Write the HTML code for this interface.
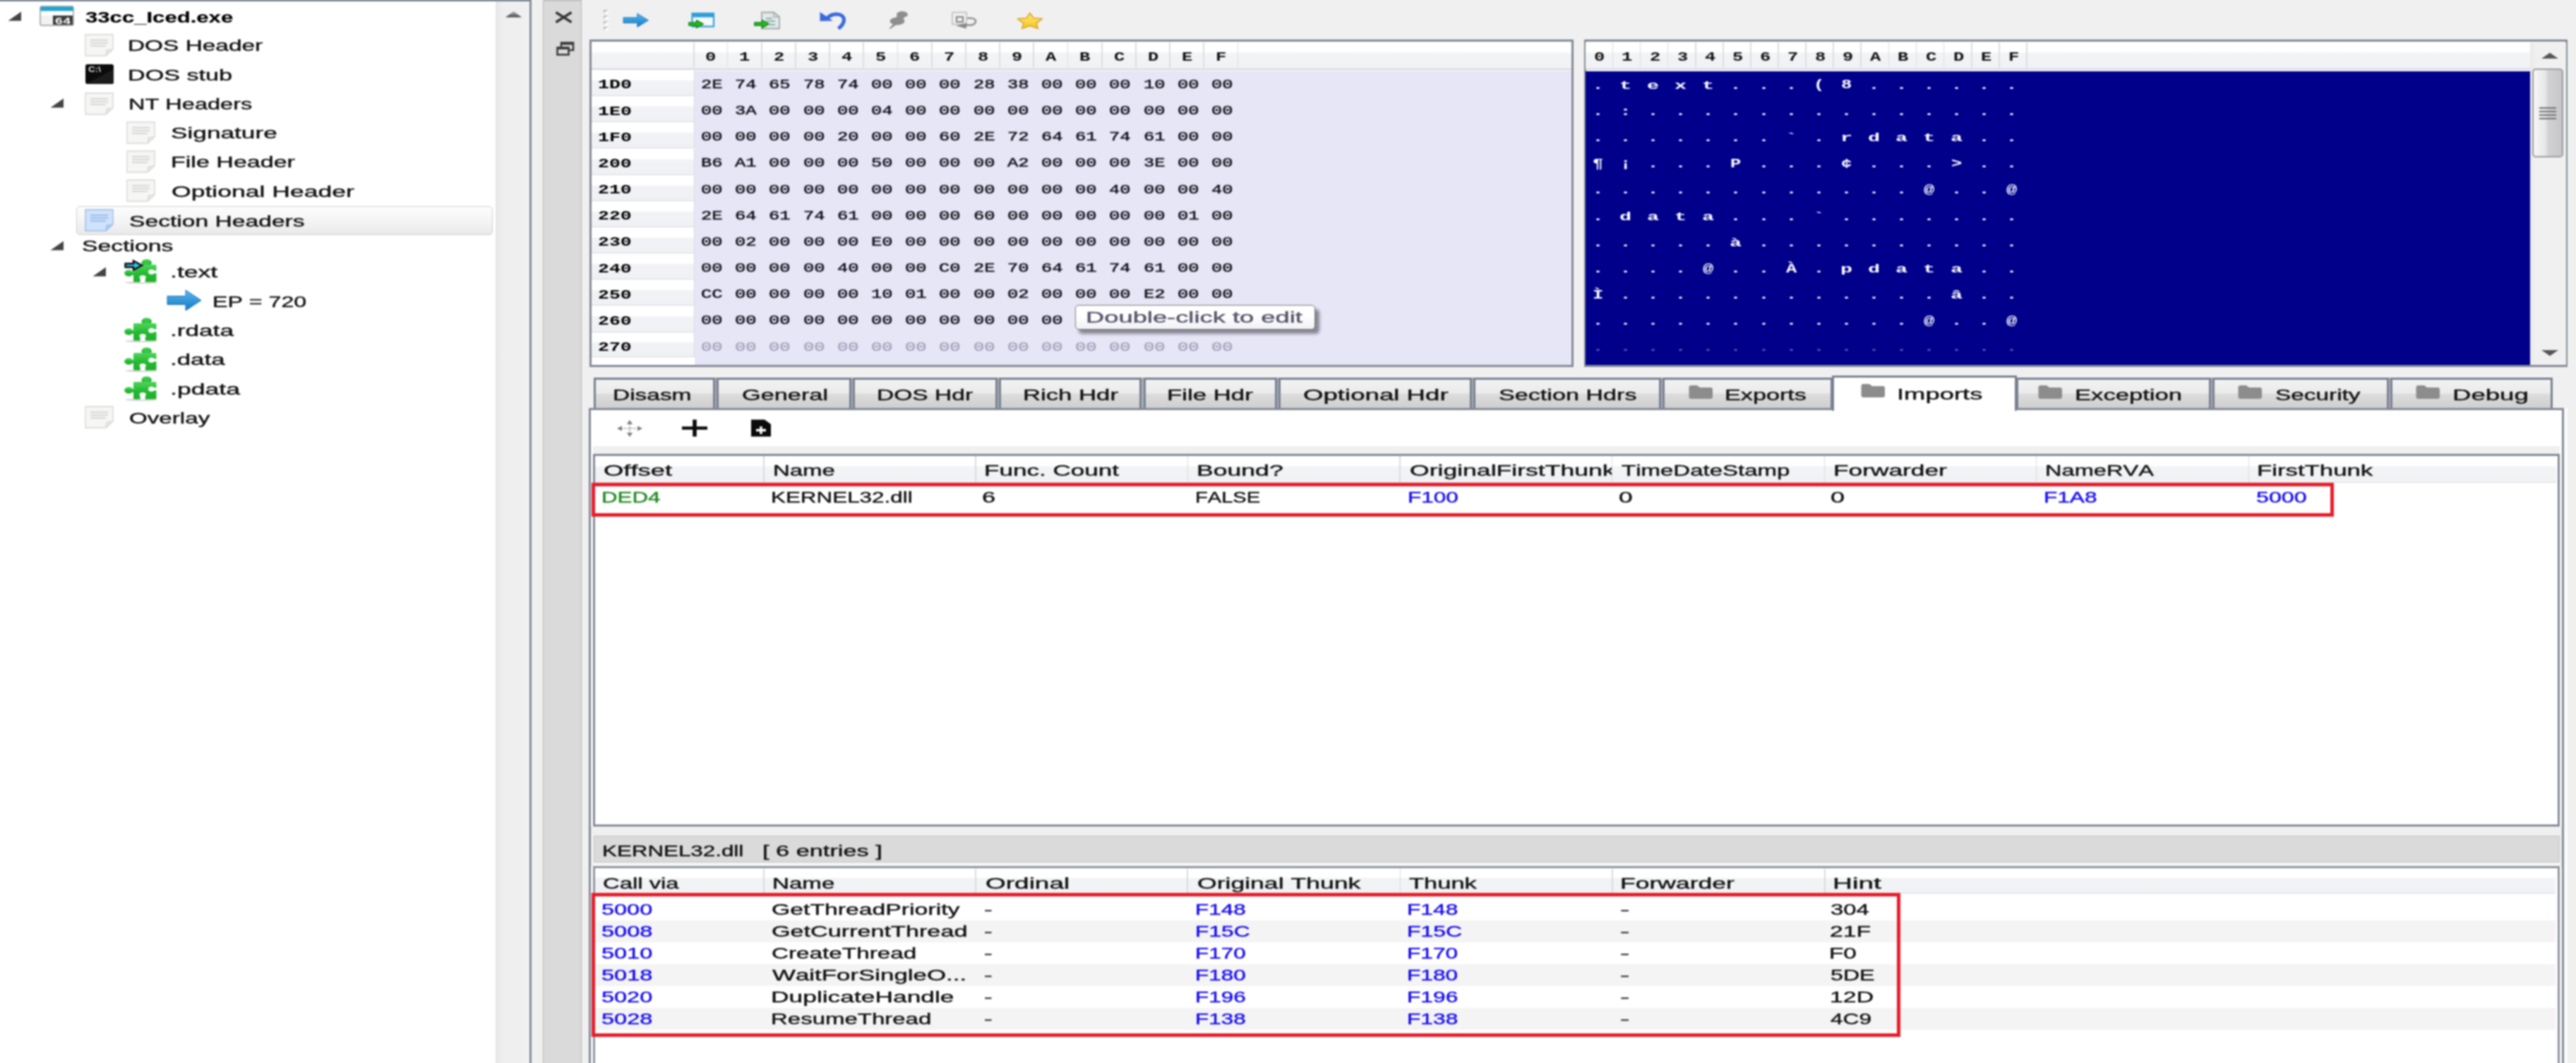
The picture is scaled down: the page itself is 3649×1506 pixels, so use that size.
<!DOCTYPE html>
<html><head><meta charset="utf-8"><title>PE-bear</title><style>
html,body{margin:0;padding:0}
html{width:3649px;height:1506px;overflow:hidden}
body{width:3649px;height:1506px;overflow:hidden;background:#f0f0f0;position:relative;font-family:"Liberation Sans",sans-serif;font-kerning:none}
div,span.t,svg{position:absolute;box-sizing:border-box}
#w{left:0;top:0;width:3649px;height:1506px;overflow:hidden;background:#f0f0f0}
#f{left:-16px;top:-16px;width:3681px;height:1538px;background:#f0f0f0;filter:blur(0.9px);overflow:hidden}
#c{left:16px;top:16px;width:3649px;height:1522px}
.t{white-space:pre;line-height:1;transform-origin:0 0;display:block}
.s{font-family:"Liberation Sans",sans-serif;-webkit-text-stroke:0.4px currentColor}
.m{font-family:"Liberation Mono",monospace}
.m.k{-webkit-text-stroke:0.55px currentColor}
.s.b{-webkit-text-stroke:0.2px currentColor}
.b{font-weight:bold}
</style></head><body>
<div id="w"><div id="f"><div id="c">
<div style="left:-16.0px;top:-16.0px;width:718.0px;height:1540.0px;background:#fff;"></div>
<div style="left:702.0px;top:-16.0px;width:48.5px;height:1540.0px;background:linear-gradient(90deg,#e6e6e6 0,#efefef 10px,#f0f0f0 100%);"></div>
<div style="left:-16.0px;top:-16.0px;width:769.0px;height:17.6px;background:#7d8694;"></div>
<div style="left:750.3px;top:-16.0px;width:3.0px;height:1540.0px;background:#868d9a;"></div>
<svg style="left:714px;top:14px" width="28" height="12" viewBox="0 0 28 12"><defs><linearGradient id="ga" x1="0" y1="0" x2="0" y2="1"><stop offset="0" stop-color="#bbb"/><stop offset="1" stop-color="#444"/></linearGradient></defs><path d="M2 10.5 L13.5 2 L25 10.5 Z" fill="url(#ga)"/></svg>
<div style="left:768.8px;top:-16.0px;width:55.5px;height:1540.0px;background:#dadada;border-left:1.5px solid #b6b6b6;border-right:1.5px solid #b6b6b6;"></div>
<div style="left:768.8px;top:-16.0px;width:55.5px;height:17.6px;background:#c4c4c4;"></div>
<svg style="left:784.5px;top:15px" width="27" height="19" viewBox="0 0 27 19"><path d="M2.5 2.5 L24.5 16.5 M24.5 2.5 L2.5 16.5" stroke="#363636" stroke-width="3.8" fill="none"/></svg>
<svg style="left:787px;top:58px" width="28" height="22" viewBox="0 0 28 22"><path d="M8 8 V2.5 H25 V13 H19" stroke="#3a3a3a" stroke-width="2.6" fill="none"/><rect x="8" y="2" width="17" height="3.5" fill="#3a3a3a"/><rect x="2.5" y="9.5" width="16" height="10" stroke="#3a3a3a" stroke-width="2.6" fill="none"/><rect x="2.5" y="8.5" width="16" height="3.5" fill="#3a3a3a"/></svg>
<div style="left:108.0px;top:292.0px;width:590.0px;height:40.5px;background:linear-gradient(180deg,#fdfdfd 0,#f4f4f4 55%,#e9e9e9 100%);border:1.5px solid #d0d0d0;border-radius:5px;"></div>
<svg style="left:10.5px;top:15.5px" width="20" height="14" viewBox="0 0 20 14"><path d="M0.5 13.5 L19 13.5 L19 0.5 Z" fill="#444"/></svg>
<svg style="left:56px;top:8px" width="49" height="29" viewBox="0 0 49 29"><rect x="1" y="1" width="47" height="27" rx="2.5" fill="#f2f2f2" stroke="#9a9a9a" stroke-width="1.5"/><path d="M1.5 3.5 Q1.5 1.5 3.5 1.5 H45.5 Q47.5 1.5 47.5 3.5 V7.5 H1.5 Z" fill="#1fa3cf"/><rect x="2" y="8" width="45" height="6" fill="#fff"/><rect x="19" y="14" width="28" height="13" fill="#3a3a3a"/><text x="21.5" y="25.5" font-family="Liberation Mono,monospace" font-weight="bold" font-size="13" textLength="23" lengthAdjust="spacingAndGlyphs" fill="#fff">64</text></svg>
<span class="t s b" style="left:121.4px;top:14.4px;font-size:22.5px;color:#000;transform:scaleX(1.382);">33cc_Iced.exe</span>
<svg style="left:120px;top:48px" width="42" height="32" viewBox="0 0 42 32"><path d="M1 1 H40 V22 L30 31 H1 Z" fill="#f6f6f5" stroke="#d6d6d3" stroke-width="1.4"/><path d="M40 22 L30 31 L31 23 Z" fill="#e6e6e4" stroke="#d6d6d3" stroke-width="1"/><path d="M8 9 H33 M8 13 H33 M8 17 H30" stroke="#d6d6d3" stroke-width="2.2"/><path d="M10 11 H30 M10 15 H28" stroke="#f6f6f5" stroke-width="1.5" stroke-dasharray="3 2"/></svg>
<span class="t s" style="left:181.3px;top:55.3px;font-size:21.5px;color:#111;transform:scaleX(1.553);">DOS Header</span>
<svg style="left:120px;top:90px" width="42" height="30" viewBox="0 0 42 30"><rect x="1" y="1" width="40" height="28" rx="3" fill="#0b0b0b"/><path d="M2 29 L41 8 V27 Q41 29 39 29 Z" fill="#1c1c1c"/><text x="5" y="12" font-family="Liberation Sans,sans-serif" font-weight="bold" font-size="10" textLength="18" lengthAdjust="spacingAndGlyphs" fill="#ddd">C:\</text></svg>
<span class="t s" style="left:181.3px;top:97.3px;font-size:21.5px;color:#111;transform:scaleX(1.589);">DOS stub</span>
<svg style="left:71px;top:139px" width="20" height="14" viewBox="0 0 20 14"><path d="M0.5 13.5 L19 13.5 L19 0.5 Z" fill="#444"/></svg>
<svg style="left:120px;top:131px" width="42" height="32" viewBox="0 0 42 32"><path d="M1 1 H40 V22 L30 31 H1 Z" fill="#f6f6f5" stroke="#d6d6d3" stroke-width="1.4"/><path d="M40 22 L30 31 L31 23 Z" fill="#e6e6e4" stroke="#d6d6d3" stroke-width="1"/><path d="M8 9 H33 M8 13 H33 M8 17 H30" stroke="#d6d6d3" stroke-width="2.2"/><path d="M10 11 H30 M10 15 H28" stroke="#f6f6f5" stroke-width="1.5" stroke-dasharray="3 2"/></svg>
<span class="t s" style="left:182.4px;top:137.6px;font-size:21.5px;color:#111;transform:scaleX(1.512);">NT Headers</span>
<svg style="left:179px;top:172px" width="42" height="32" viewBox="0 0 42 32"><path d="M1 1 H40 V22 L30 31 H1 Z" fill="#f6f6f5" stroke="#d6d6d3" stroke-width="1.4"/><path d="M40 22 L30 31 L31 23 Z" fill="#e6e6e4" stroke="#d6d6d3" stroke-width="1"/><path d="M8 9 H33 M8 13 H33 M8 17 H30" stroke="#d6d6d3" stroke-width="2.2"/><path d="M10 11 H30 M10 15 H28" stroke="#f6f6f5" stroke-width="1.5" stroke-dasharray="3 2"/></svg>
<span class="t s" style="left:242.0px;top:178.8px;font-size:21.5px;color:#111;transform:scaleX(1.638);">Signature</span>
<svg style="left:179px;top:213px" width="42" height="32" viewBox="0 0 42 32"><path d="M1 1 H40 V22 L30 31 H1 Z" fill="#f6f6f5" stroke="#d6d6d3" stroke-width="1.4"/><path d="M40 22 L30 31 L31 23 Z" fill="#e6e6e4" stroke="#d6d6d3" stroke-width="1"/><path d="M8 9 H33 M8 13 H33 M8 17 H30" stroke="#d6d6d3" stroke-width="2.2"/><path d="M10 11 H30 M10 15 H28" stroke="#f6f6f5" stroke-width="1.5" stroke-dasharray="3 2"/></svg>
<span class="t s" style="left:241.6px;top:220.3px;font-size:21.5px;color:#111;transform:scaleX(1.583);">File Header</span>
<svg style="left:179px;top:254px" width="42" height="32" viewBox="0 0 42 32"><path d="M1 1 H40 V22 L30 31 H1 Z" fill="#f6f6f5" stroke="#d6d6d3" stroke-width="1.4"/><path d="M40 22 L30 31 L31 23 Z" fill="#e6e6e4" stroke="#d6d6d3" stroke-width="1"/><path d="M8 9 H33 M8 13 H33 M8 17 H30" stroke="#d6d6d3" stroke-width="2.2"/><path d="M10 11 H30 M10 15 H28" stroke="#f6f6f5" stroke-width="1.5" stroke-dasharray="3 2"/></svg>
<span class="t s" style="left:242.7px;top:262.0px;font-size:21.5px;color:#111;transform:scaleX(1.653);">Optional Header</span>
<svg style="left:120px;top:296px" width="42" height="32" viewBox="0 0 42 32"><path d="M1 1 H40 V22 L30 31 H1 Z" fill="#cfe2fb" stroke="#9cbce6" stroke-width="1.4"/><path d="M40 22 L30 31 L31 23 Z" fill="#a9cbf3" stroke="#9cbce6" stroke-width="1"/><path d="M8 9 H33 M8 13 H33 M8 17 H30" stroke="#9cbce6" stroke-width="2.2"/><path d="M10 11 H30 M10 15 H28" stroke="#cfe2fb" stroke-width="1.5" stroke-dasharray="3 2"/></svg>
<span class="t s" style="left:182.5px;top:303.5px;font-size:21.5px;color:#111;transform:scaleX(1.564);">Section Headers</span>
<svg style="left:71px;top:341px" width="20" height="14" viewBox="0 0 20 14"><path d="M0.5 13.5 L19 13.5 L19 0.5 Z" fill="#444"/></svg>
<span class="t s" style="left:116.1px;top:338.8px;font-size:21.5px;color:#111;transform:scaleX(1.569);">Sections</span>
<svg style="left:131px;top:378px" width="20" height="14" viewBox="0 0 20 14"><path d="M0.5 13.5 L19 13.5 L19 0.5 Z" fill="#444"/></svg>
<svg style="left:176.0px;top:367px" width="48" height="36" viewBox="0 0 48 36"><defs><linearGradient id="gp" x1="0" y1="0" x2="0" y2="1"><stop offset="0" stop-color="#4fd65c"/><stop offset="0.5" stop-color="#27b934"/><stop offset="1" stop-color="#1cb026"/></linearGradient></defs><ellipse cx="24" cy="33.3" rx="23" ry="1.6" fill="#bdbdbd" opacity="0.7"/><g fill="url(#gp)"><ellipse cx="31.7" cy="5.2" rx="7.2" ry="5"/><rect x="28" y="5" width="7.4" height="6"/><rect x="13" y="8" width="32.5" height="24.6" rx="1.5"/><ellipse cx="6.4" cy="20" rx="6.2" ry="4.7"/><rect x="8" y="17.6" width="8" height="4.8"/></g><g fill="#fff"><ellipse cx="38.5" cy="18.3" rx="4.4" ry="3.5"/><rect x="40" y="16.4" width="6" height="3.8"/><rect x="22.6" y="26.2" width="7.2" height="7"/><ellipse cx="26.2" cy="26" rx="4.6" ry="3"/></g><path d="M1.5 6.5 H13 V2.5 L25 9 L13 15.5 V11.5 H1.5 Z" fill="#3db9ee" stroke="#0a0a0a" stroke-width="2.4" stroke-linejoin="miter"/></svg>
<span class="t s" style="left:241.1px;top:376.1px;font-size:21.5px;color:#111;transform:scaleX(1.655);">.text</span>
<svg style="left:236px;top:410px" width="50" height="31" viewBox="0 0 50 31"><defs><linearGradient id="gb" x1="0" y1="0" x2="0" y2="1"><stop offset="0" stop-color="#5ab8ee"/><stop offset="1" stop-color="#1279c4"/></linearGradient></defs><path d="M1 9.5 H27 V1 L49 15.5 L27 30 V21.5 H1 Z" fill="url(#gb)" stroke="#1a78bd" stroke-width="1"/></svg>
<span class="t s" style="left:301.2px;top:417.6px;font-size:21.5px;color:#111;transform:scaleX(1.495);">EP = 720</span>
<svg style="left:176.0px;top:450px" width="48" height="36" viewBox="0 0 48 36"><defs><linearGradient id="gp" x1="0" y1="0" x2="0" y2="1"><stop offset="0" stop-color="#4fd65c"/><stop offset="0.5" stop-color="#27b934"/><stop offset="1" stop-color="#1cb026"/></linearGradient></defs><ellipse cx="24" cy="33.3" rx="23" ry="1.6" fill="#bdbdbd" opacity="0.7"/><g fill="url(#gp)"><ellipse cx="31.7" cy="5.2" rx="7.2" ry="5"/><rect x="28" y="5" width="7.4" height="6"/><rect x="13" y="8" width="32.5" height="24.6" rx="1.5"/><ellipse cx="6.4" cy="20" rx="6.2" ry="4.7"/><rect x="8" y="17.6" width="8" height="4.8"/></g><g fill="#fff"><ellipse cx="38.5" cy="18.3" rx="4.4" ry="3.5"/><rect x="40" y="16.4" width="6" height="3.8"/><rect x="22.6" y="26.2" width="7.2" height="7"/><ellipse cx="26.2" cy="26" rx="4.6" ry="3"/></g></svg>
<span class="t s" style="left:241.1px;top:458.6px;font-size:21.5px;color:#111;transform:scaleX(1.636);">.rdata</span>
<svg style="left:176.0px;top:491.5px" width="48" height="36" viewBox="0 0 48 36"><defs><linearGradient id="gp" x1="0" y1="0" x2="0" y2="1"><stop offset="0" stop-color="#4fd65c"/><stop offset="0.5" stop-color="#27b934"/><stop offset="1" stop-color="#1cb026"/></linearGradient></defs><ellipse cx="24" cy="33.3" rx="23" ry="1.6" fill="#bdbdbd" opacity="0.7"/><g fill="url(#gp)"><ellipse cx="31.7" cy="5.2" rx="7.2" ry="5"/><rect x="28" y="5" width="7.4" height="6"/><rect x="13" y="8" width="32.5" height="24.6" rx="1.5"/><ellipse cx="6.4" cy="20" rx="6.2" ry="4.7"/><rect x="8" y="17.6" width="8" height="4.8"/></g><g fill="#fff"><ellipse cx="38.5" cy="18.3" rx="4.4" ry="3.5"/><rect x="40" y="16.4" width="6" height="3.8"/><rect x="22.6" y="26.2" width="7.2" height="7"/><ellipse cx="26.2" cy="26" rx="4.6" ry="3"/></g></svg>
<span class="t s" style="left:241.2px;top:500.1px;font-size:21.5px;color:#111;transform:scaleX(1.621);">.data</span>
<svg style="left:176.0px;top:533px" width="48" height="36" viewBox="0 0 48 36"><defs><linearGradient id="gp" x1="0" y1="0" x2="0" y2="1"><stop offset="0" stop-color="#4fd65c"/><stop offset="0.5" stop-color="#27b934"/><stop offset="1" stop-color="#1cb026"/></linearGradient></defs><ellipse cx="24" cy="33.3" rx="23" ry="1.6" fill="#bdbdbd" opacity="0.7"/><g fill="url(#gp)"><ellipse cx="31.7" cy="5.2" rx="7.2" ry="5"/><rect x="28" y="5" width="7.4" height="6"/><rect x="13" y="8" width="32.5" height="24.6" rx="1.5"/><ellipse cx="6.4" cy="20" rx="6.2" ry="4.7"/><rect x="8" y="17.6" width="8" height="4.8"/></g><g fill="#fff"><ellipse cx="38.5" cy="18.3" rx="4.4" ry="3.5"/><rect x="40" y="16.4" width="6" height="3.8"/><rect x="22.6" y="26.2" width="7.2" height="7"/><ellipse cx="26.2" cy="26" rx="4.6" ry="3"/></g></svg>
<span class="t s" style="left:241.1px;top:541.5px;font-size:21.5px;color:#111;transform:scaleX(1.655);">.pdata</span>
<svg style="left:120px;top:575px" width="42" height="32" viewBox="0 0 42 32"><path d="M1 1 H40 V22 L30 31 H1 Z" fill="#f6f6f5" stroke="#d6d6d3" stroke-width="1.4"/><path d="M40 22 L30 31 L31 23 Z" fill="#e6e6e4" stroke="#d6d6d3" stroke-width="1"/><path d="M8 9 H33 M8 13 H33 M8 17 H30" stroke="#d6d6d3" stroke-width="2.2"/><path d="M10 11 H30 M10 15 H28" stroke="#f6f6f5" stroke-width="1.5" stroke-dasharray="3 2"/></svg>
<span class="t s" style="left:182.5px;top:583.3px;font-size:21.5px;color:#111;transform:scaleX(1.542);">Overlay</span>
<svg style="left:853px;top:13px" width="10" height="31" viewBox="0 0 10 31"><rect x="2" y="1" width="5" height="4" fill="#bdbdbd"/><rect x="4" y="3" width="5" height="3" fill="#fff"/><rect x="2" y="9" width="5" height="4" fill="#bdbdbd"/><rect x="4" y="11" width="5" height="3" fill="#fff"/><rect x="2" y="17" width="5" height="4" fill="#bdbdbd"/><rect x="4" y="19" width="5" height="3" fill="#fff"/><rect x="2" y="25" width="5" height="4" fill="#bdbdbd"/><rect x="4" y="27" width="5" height="3" fill="#fff"/></svg>
<svg style="left:881.5px;top:18px" width="37.5" height="21.5" viewBox="0 0 38 22" preserveAspectRatio="none"><defs><linearGradient id="gc" x1="0" y1="0" x2="0" y2="1"><stop offset="0" stop-color="#5ab8ee"/><stop offset="1" stop-color="#1279c4"/></linearGradient></defs><path d="M1 7 H21 V1 L37 11 L21 21 V15 H1 Z" fill="url(#gc)" stroke="#1a78bd" stroke-width="0.8"/></svg>
<svg style="left:975px;top:17px" width="38" height="24" viewBox="0 0 38 24"><rect x="5.5" y="2" width="30.5" height="18.5" fill="#f8f8f8" stroke="#2f9fd8" stroke-width="2.2"/><rect x="5.5" y="2" width="30.5" height="5.5" fill="#2f9fd8"/><path d="M0.8 14.8 H11.5 V11.6 L21.5 17 L11.5 22.4 V19.2 H0.8 Z" fill="#1fc01f" stroke="#0f7a12" stroke-width="1.2"/></svg>
<svg style="left:1068px;top:15.5px" width="38" height="26" viewBox="0 0 38 26"><path d="M11 1.5 H28 L36 8 V24.5 H11 Z" fill="#dcecea" stroke="#a6a6a6" stroke-width="1.8"/><path d="M28 1.5 V8 H36" fill="none" stroke="#a6a6a6" stroke-width="1.4"/><path d="M17 10 H26 M17 14 H30 M22 19 H30" stroke="#9fa8a8" stroke-width="1.8"/><path d="M0.8 15.8 H11.5 V12.6 L21.5 18 L11.5 23.4 V20.2 H0.8 Z" fill="#1fc01f" stroke="#0f7a12" stroke-width="1.2"/></svg>
<svg style="left:1160px;top:15px" width="40" height="27" viewBox="0 0 40 27"><path d="M12 10.5 C20 2 36 4 35.5 13.5 C35 19 31 23 27.5 25.5" stroke="#3a6bdc" stroke-width="5.2" fill="none" stroke-linecap="butt"/><path d="M1.5 2 L1.5 15 L20 14.5 Z" fill="#3a6bdc"/></svg>
<svg style="left:1258px;top:15px" width="31" height="27" viewBox="0 0 31 27"><g fill="#8e8e8e"><ellipse cx="20" cy="5.5" rx="8" ry="4.4"/><ellipse cx="13" cy="15" rx="10.5" ry="5.4"/><path d="M14 6 L24 8 L19 16 L9 13 Z"/><path d="M9 17 L1.5 25.5 L3 26 L13 19 Z"/></g></svg>
<svg style="left:1347px;top:15.5px" width="39" height="26" viewBox="0 0 39 26"><rect x="2" y="1.5" width="20" height="17" fill="#efefef" stroke="#c2c2c2" stroke-width="1.8"/><rect x="8" y="8" width="9" height="7" fill="none" stroke="#8a8a8a" stroke-width="2.2"/><path d="M23 10 C36 8 39 16 30 19.5 H22" stroke="#8f8f8f" stroke-width="2.4" fill="none"/><path d="M7 20.5 L22 16.5 V24.5 Z" fill="#8a8a8a"/></svg>
<svg style="left:1440px;top:17px" width="38" height="25" viewBox="0 0 38 25"><defs><linearGradient id="gs" x1="0" y1="0" x2="0" y2="1"><stop offset="0" stop-color="#f9e27a"/><stop offset="0.55" stop-color="#f8d84a"/><stop offset="1" stop-color="#f2c40a"/></linearGradient></defs><path d="M19 1.5 L24 8.5 L36.5 9.5 L28 16 L30.5 23.5 L19 19.5 L7.5 23.5 L10 16 L1.5 9.5 L14 8.5 Z" fill="url(#gs)" stroke="#e2a428" stroke-width="1.6" stroke-linejoin="round"/></svg>
<div style="left:834.6px;top:56.0px;width:1394.0px;height:464.0px;background:#fff;border:3px solid #828a96;"></div>
<div style="left:837.6px;top:59.6px;width:1388.0px;height:39.4px;background:linear-gradient(180deg,#fff 0,#fff 38%,#f3f4f6 40%,#f1f2f5 100%);border-bottom:2.2px solid #d6d7da;"></div>
<div style="left:984.2px;top:100.0px;width:1241.4px;height:417.0px;background:#e7e6f6;"></div>
<div style="left:837.6px;top:99.0px;width:146.0px;height:37.2px;background:linear-gradient(180deg,#fff 0,#fff 40%,#f2f3f6 42%,#f0f1f4 100%);border-bottom:1.6px solid #d8d9dd;border-right:1.6px solid #d8d9dd;"></div>
<span class="t m b" style="left:847.3px;top:111.4px;font-size:19px;color:#000;transform:scaleX(1.400);">1D0</span>
<div style="left:837.6px;top:136.2px;width:146.0px;height:37.2px;background:linear-gradient(180deg,#fff 0,#fff 40%,#f2f3f6 42%,#f0f1f4 100%);border-bottom:1.6px solid #d8d9dd;border-right:1.6px solid #d8d9dd;"></div>
<span class="t m b" style="left:847.3px;top:148.6px;font-size:19px;color:#000;transform:scaleX(1.400);">1E0</span>
<div style="left:837.6px;top:173.3px;width:146.0px;height:37.2px;background:linear-gradient(180deg,#fff 0,#fff 40%,#f2f3f6 42%,#f0f1f4 100%);border-bottom:1.6px solid #d8d9dd;border-right:1.6px solid #d8d9dd;"></div>
<span class="t m b" style="left:847.3px;top:185.8px;font-size:19px;color:#000;transform:scaleX(1.400);">1F0</span>
<div style="left:837.6px;top:210.5px;width:146.0px;height:37.2px;background:linear-gradient(180deg,#fff 0,#fff 40%,#f2f3f6 42%,#f0f1f4 100%);border-bottom:1.6px solid #d8d9dd;border-right:1.6px solid #d8d9dd;"></div>
<span class="t m b" style="left:847.4px;top:222.9px;font-size:19px;color:#000;transform:scaleX(1.396);">200</span>
<div style="left:837.6px;top:247.6px;width:146.0px;height:37.2px;background:linear-gradient(180deg,#fff 0,#fff 40%,#f2f3f6 42%,#f0f1f4 100%);border-bottom:1.6px solid #d8d9dd;border-right:1.6px solid #d8d9dd;"></div>
<span class="t m b" style="left:847.4px;top:260.1px;font-size:19px;color:#000;transform:scaleX(1.396);">210</span>
<div style="left:837.6px;top:284.8px;width:146.0px;height:37.2px;background:linear-gradient(180deg,#fff 0,#fff 40%,#f2f3f6 42%,#f0f1f4 100%);border-bottom:1.6px solid #d8d9dd;border-right:1.6px solid #d8d9dd;"></div>
<span class="t m b" style="left:847.4px;top:297.2px;font-size:19px;color:#000;transform:scaleX(1.396);">220</span>
<div style="left:837.6px;top:322.0px;width:146.0px;height:37.2px;background:linear-gradient(180deg,#fff 0,#fff 40%,#f2f3f6 42%,#f0f1f4 100%);border-bottom:1.6px solid #d8d9dd;border-right:1.6px solid #d8d9dd;"></div>
<span class="t m b" style="left:847.4px;top:334.4px;font-size:19px;color:#000;transform:scaleX(1.396);">230</span>
<div style="left:837.6px;top:359.1px;width:146.0px;height:37.2px;background:linear-gradient(180deg,#fff 0,#fff 40%,#f2f3f6 42%,#f0f1f4 100%);border-bottom:1.6px solid #d8d9dd;border-right:1.6px solid #d8d9dd;"></div>
<span class="t m b" style="left:847.4px;top:371.6px;font-size:19px;color:#000;transform:scaleX(1.396);">240</span>
<div style="left:837.6px;top:396.3px;width:146.0px;height:37.2px;background:linear-gradient(180deg,#fff 0,#fff 40%,#f2f3f6 42%,#f0f1f4 100%);border-bottom:1.6px solid #d8d9dd;border-right:1.6px solid #d8d9dd;"></div>
<span class="t m b" style="left:847.4px;top:408.7px;font-size:19px;color:#000;transform:scaleX(1.396);">250</span>
<div style="left:837.6px;top:433.4px;width:146.0px;height:37.2px;background:linear-gradient(180deg,#fff 0,#fff 40%,#f2f3f6 42%,#f0f1f4 100%);border-bottom:1.6px solid #d8d9dd;border-right:1.6px solid #d8d9dd;"></div>
<span class="t m b" style="left:847.4px;top:445.9px;font-size:19px;color:#000;transform:scaleX(1.396);">260</span>
<div style="left:837.6px;top:470.6px;width:146.0px;height:35.4px;background:linear-gradient(180deg,#fff 0,#fff 40%,#f2f3f6 42%,#f0f1f4 100%);border-bottom:1.6px solid #d8d9dd;border-right:1.6px solid #d8d9dd;"></div>
<span class="t m b" style="left:847.4px;top:483.0px;font-size:19px;color:#000;transform:scaleX(1.396);">270</span>
<span class="t m b" style="left:999.2px;top:72.4px;font-size:19px;color:#111;transform:scaleX(1.342);">0</span>
<div style="left:1029.6px;top:60.4px;width:1.8px;height:36.0px;background:#dcdde1;"></div>
<span class="t m k" style="left:992.9px;top:110.9px;font-size:19px;color:#14141f;transform:scaleX(1.342);">2E</span>
<span class="t m k" style="left:992.9px;top:148.1px;font-size:19px;color:#14141f;transform:scaleX(1.342);">00</span>
<span class="t m k" style="left:992.9px;top:185.3px;font-size:19px;color:#14141f;transform:scaleX(1.342);">00</span>
<span class="t m k" style="left:992.9px;top:222.4px;font-size:19px;color:#14141f;transform:scaleX(1.342);">B6</span>
<span class="t m k" style="left:992.9px;top:259.6px;font-size:19px;color:#14141f;transform:scaleX(1.342);">00</span>
<span class="t m k" style="left:992.9px;top:296.7px;font-size:19px;color:#14141f;transform:scaleX(1.342);">2E</span>
<span class="t m k" style="left:992.9px;top:333.9px;font-size:19px;color:#14141f;transform:scaleX(1.342);">00</span>
<span class="t m k" style="left:992.9px;top:371.1px;font-size:19px;color:#14141f;transform:scaleX(1.342);">00</span>
<span class="t m k" style="left:992.9px;top:408.2px;font-size:19px;color:#14141f;transform:scaleX(1.342);">CC</span>
<span class="t m k" style="left:992.9px;top:445.4px;font-size:19px;color:#14141f;transform:scaleX(1.342);">00</span>
<span class="t m k" style="left:992.9px;top:482.5px;font-size:19px;color:#a6a6be;transform:scaleX(1.342);">00</span>
<span class="t m b" style="left:1047.4px;top:72.4px;font-size:19px;color:#111;transform:scaleX(1.342);">1</span>
<div style="left:1077.8px;top:60.4px;width:1.8px;height:36.0px;background:#dcdde1;"></div>
<span class="t m k" style="left:1041.1px;top:110.9px;font-size:19px;color:#14141f;transform:scaleX(1.342);">74</span>
<span class="t m k" style="left:1041.1px;top:148.1px;font-size:19px;color:#14141f;transform:scaleX(1.342);">3A</span>
<span class="t m k" style="left:1041.1px;top:185.3px;font-size:19px;color:#14141f;transform:scaleX(1.342);">00</span>
<span class="t m k" style="left:1041.1px;top:222.4px;font-size:19px;color:#14141f;transform:scaleX(1.342);">A1</span>
<span class="t m k" style="left:1041.1px;top:259.6px;font-size:19px;color:#14141f;transform:scaleX(1.342);">00</span>
<span class="t m k" style="left:1041.1px;top:296.7px;font-size:19px;color:#14141f;transform:scaleX(1.342);">64</span>
<span class="t m k" style="left:1041.1px;top:333.9px;font-size:19px;color:#14141f;transform:scaleX(1.342);">02</span>
<span class="t m k" style="left:1041.1px;top:371.1px;font-size:19px;color:#14141f;transform:scaleX(1.342);">00</span>
<span class="t m k" style="left:1041.1px;top:408.2px;font-size:19px;color:#14141f;transform:scaleX(1.342);">00</span>
<span class="t m k" style="left:1041.1px;top:445.4px;font-size:19px;color:#14141f;transform:scaleX(1.342);">00</span>
<span class="t m k" style="left:1041.1px;top:482.5px;font-size:19px;color:#a6a6be;transform:scaleX(1.342);">00</span>
<span class="t m b" style="left:1095.6px;top:72.4px;font-size:19px;color:#111;transform:scaleX(1.342);">2</span>
<div style="left:1126.0px;top:60.4px;width:1.8px;height:36.0px;background:#dcdde1;"></div>
<span class="t m k" style="left:1089.3px;top:110.9px;font-size:19px;color:#14141f;transform:scaleX(1.342);">65</span>
<span class="t m k" style="left:1089.3px;top:148.1px;font-size:19px;color:#14141f;transform:scaleX(1.342);">00</span>
<span class="t m k" style="left:1089.3px;top:185.3px;font-size:19px;color:#14141f;transform:scaleX(1.342);">00</span>
<span class="t m k" style="left:1089.3px;top:222.4px;font-size:19px;color:#14141f;transform:scaleX(1.342);">00</span>
<span class="t m k" style="left:1089.3px;top:259.6px;font-size:19px;color:#14141f;transform:scaleX(1.342);">00</span>
<span class="t m k" style="left:1089.3px;top:296.7px;font-size:19px;color:#14141f;transform:scaleX(1.342);">61</span>
<span class="t m k" style="left:1089.3px;top:333.9px;font-size:19px;color:#14141f;transform:scaleX(1.342);">00</span>
<span class="t m k" style="left:1089.3px;top:371.1px;font-size:19px;color:#14141f;transform:scaleX(1.342);">00</span>
<span class="t m k" style="left:1089.3px;top:408.2px;font-size:19px;color:#14141f;transform:scaleX(1.342);">00</span>
<span class="t m k" style="left:1089.3px;top:445.4px;font-size:19px;color:#14141f;transform:scaleX(1.342);">00</span>
<span class="t m k" style="left:1089.3px;top:482.5px;font-size:19px;color:#a6a6be;transform:scaleX(1.342);">00</span>
<span class="t m b" style="left:1143.8px;top:72.4px;font-size:19px;color:#111;transform:scaleX(1.342);">3</span>
<div style="left:1174.2px;top:60.4px;width:1.8px;height:36.0px;background:#dcdde1;"></div>
<span class="t m k" style="left:1137.5px;top:110.9px;font-size:19px;color:#14141f;transform:scaleX(1.342);">78</span>
<span class="t m k" style="left:1137.5px;top:148.1px;font-size:19px;color:#14141f;transform:scaleX(1.342);">00</span>
<span class="t m k" style="left:1137.5px;top:185.3px;font-size:19px;color:#14141f;transform:scaleX(1.342);">00</span>
<span class="t m k" style="left:1137.5px;top:222.4px;font-size:19px;color:#14141f;transform:scaleX(1.342);">00</span>
<span class="t m k" style="left:1137.5px;top:259.6px;font-size:19px;color:#14141f;transform:scaleX(1.342);">00</span>
<span class="t m k" style="left:1137.5px;top:296.7px;font-size:19px;color:#14141f;transform:scaleX(1.342);">74</span>
<span class="t m k" style="left:1137.5px;top:333.9px;font-size:19px;color:#14141f;transform:scaleX(1.342);">00</span>
<span class="t m k" style="left:1137.5px;top:371.1px;font-size:19px;color:#14141f;transform:scaleX(1.342);">00</span>
<span class="t m k" style="left:1137.5px;top:408.2px;font-size:19px;color:#14141f;transform:scaleX(1.342);">00</span>
<span class="t m k" style="left:1137.5px;top:445.4px;font-size:19px;color:#14141f;transform:scaleX(1.342);">00</span>
<span class="t m k" style="left:1137.5px;top:482.5px;font-size:19px;color:#a6a6be;transform:scaleX(1.342);">00</span>
<span class="t m b" style="left:1192.0px;top:72.4px;font-size:19px;color:#111;transform:scaleX(1.342);">4</span>
<div style="left:1222.4px;top:60.4px;width:1.8px;height:36.0px;background:#dcdde1;"></div>
<span class="t m k" style="left:1185.7px;top:110.9px;font-size:19px;color:#14141f;transform:scaleX(1.342);">74</span>
<span class="t m k" style="left:1185.7px;top:148.1px;font-size:19px;color:#14141f;transform:scaleX(1.342);">00</span>
<span class="t m k" style="left:1185.7px;top:185.3px;font-size:19px;color:#14141f;transform:scaleX(1.342);">20</span>
<span class="t m k" style="left:1185.7px;top:222.4px;font-size:19px;color:#14141f;transform:scaleX(1.342);">00</span>
<span class="t m k" style="left:1185.7px;top:259.6px;font-size:19px;color:#14141f;transform:scaleX(1.342);">00</span>
<span class="t m k" style="left:1185.7px;top:296.7px;font-size:19px;color:#14141f;transform:scaleX(1.342);">61</span>
<span class="t m k" style="left:1185.7px;top:333.9px;font-size:19px;color:#14141f;transform:scaleX(1.342);">00</span>
<span class="t m k" style="left:1185.7px;top:371.1px;font-size:19px;color:#14141f;transform:scaleX(1.342);">40</span>
<span class="t m k" style="left:1185.7px;top:408.2px;font-size:19px;color:#14141f;transform:scaleX(1.342);">00</span>
<span class="t m k" style="left:1185.7px;top:445.4px;font-size:19px;color:#14141f;transform:scaleX(1.342);">00</span>
<span class="t m k" style="left:1185.7px;top:482.5px;font-size:19px;color:#a6a6be;transform:scaleX(1.342);">00</span>
<span class="t m b" style="left:1240.2px;top:72.4px;font-size:19px;color:#111;transform:scaleX(1.342);">5</span>
<div style="left:1270.6px;top:60.4px;width:1.8px;height:36.0px;background:#dcdde1;"></div>
<span class="t m k" style="left:1233.9px;top:110.9px;font-size:19px;color:#14141f;transform:scaleX(1.342);">00</span>
<span class="t m k" style="left:1233.9px;top:148.1px;font-size:19px;color:#14141f;transform:scaleX(1.342);">04</span>
<span class="t m k" style="left:1233.9px;top:185.3px;font-size:19px;color:#14141f;transform:scaleX(1.342);">00</span>
<span class="t m k" style="left:1233.9px;top:222.4px;font-size:19px;color:#14141f;transform:scaleX(1.342);">50</span>
<span class="t m k" style="left:1233.9px;top:259.6px;font-size:19px;color:#14141f;transform:scaleX(1.342);">00</span>
<span class="t m k" style="left:1233.9px;top:296.7px;font-size:19px;color:#14141f;transform:scaleX(1.342);">00</span>
<span class="t m k" style="left:1233.9px;top:333.9px;font-size:19px;color:#14141f;transform:scaleX(1.342);">E0</span>
<span class="t m k" style="left:1233.9px;top:371.1px;font-size:19px;color:#14141f;transform:scaleX(1.342);">00</span>
<span class="t m k" style="left:1233.9px;top:408.2px;font-size:19px;color:#14141f;transform:scaleX(1.342);">10</span>
<span class="t m k" style="left:1233.9px;top:445.4px;font-size:19px;color:#14141f;transform:scaleX(1.342);">00</span>
<span class="t m k" style="left:1233.9px;top:482.5px;font-size:19px;color:#a6a6be;transform:scaleX(1.342);">00</span>
<span class="t m b" style="left:1288.4px;top:72.4px;font-size:19px;color:#111;transform:scaleX(1.342);">6</span>
<div style="left:1318.8px;top:60.4px;width:1.8px;height:36.0px;background:#dcdde1;"></div>
<span class="t m k" style="left:1282.1px;top:110.9px;font-size:19px;color:#14141f;transform:scaleX(1.342);">00</span>
<span class="t m k" style="left:1282.1px;top:148.1px;font-size:19px;color:#14141f;transform:scaleX(1.342);">00</span>
<span class="t m k" style="left:1282.1px;top:185.3px;font-size:19px;color:#14141f;transform:scaleX(1.342);">00</span>
<span class="t m k" style="left:1282.1px;top:222.4px;font-size:19px;color:#14141f;transform:scaleX(1.342);">00</span>
<span class="t m k" style="left:1282.1px;top:259.6px;font-size:19px;color:#14141f;transform:scaleX(1.342);">00</span>
<span class="t m k" style="left:1282.1px;top:296.7px;font-size:19px;color:#14141f;transform:scaleX(1.342);">00</span>
<span class="t m k" style="left:1282.1px;top:333.9px;font-size:19px;color:#14141f;transform:scaleX(1.342);">00</span>
<span class="t m k" style="left:1282.1px;top:371.1px;font-size:19px;color:#14141f;transform:scaleX(1.342);">00</span>
<span class="t m k" style="left:1282.1px;top:408.2px;font-size:19px;color:#14141f;transform:scaleX(1.342);">01</span>
<span class="t m k" style="left:1282.1px;top:445.4px;font-size:19px;color:#14141f;transform:scaleX(1.342);">00</span>
<span class="t m k" style="left:1282.1px;top:482.5px;font-size:19px;color:#a6a6be;transform:scaleX(1.342);">00</span>
<span class="t m b" style="left:1336.6px;top:72.4px;font-size:19px;color:#111;transform:scaleX(1.342);">7</span>
<div style="left:1367.0px;top:60.4px;width:1.8px;height:36.0px;background:#dcdde1;"></div>
<span class="t m k" style="left:1330.3px;top:110.9px;font-size:19px;color:#14141f;transform:scaleX(1.342);">00</span>
<span class="t m k" style="left:1330.3px;top:148.1px;font-size:19px;color:#14141f;transform:scaleX(1.342);">00</span>
<span class="t m k" style="left:1330.3px;top:185.3px;font-size:19px;color:#14141f;transform:scaleX(1.342);">60</span>
<span class="t m k" style="left:1330.3px;top:222.4px;font-size:19px;color:#14141f;transform:scaleX(1.342);">00</span>
<span class="t m k" style="left:1330.3px;top:259.6px;font-size:19px;color:#14141f;transform:scaleX(1.342);">00</span>
<span class="t m k" style="left:1330.3px;top:296.7px;font-size:19px;color:#14141f;transform:scaleX(1.342);">00</span>
<span class="t m k" style="left:1330.3px;top:333.9px;font-size:19px;color:#14141f;transform:scaleX(1.342);">00</span>
<span class="t m k" style="left:1330.3px;top:371.1px;font-size:19px;color:#14141f;transform:scaleX(1.342);">C0</span>
<span class="t m k" style="left:1330.3px;top:408.2px;font-size:19px;color:#14141f;transform:scaleX(1.342);">00</span>
<span class="t m k" style="left:1330.3px;top:445.4px;font-size:19px;color:#14141f;transform:scaleX(1.342);">00</span>
<span class="t m k" style="left:1330.3px;top:482.5px;font-size:19px;color:#a6a6be;transform:scaleX(1.342);">00</span>
<span class="t m b" style="left:1384.8px;top:72.4px;font-size:19px;color:#111;transform:scaleX(1.342);">8</span>
<div style="left:1415.2px;top:60.4px;width:1.8px;height:36.0px;background:#dcdde1;"></div>
<span class="t m k" style="left:1378.5px;top:110.9px;font-size:19px;color:#14141f;transform:scaleX(1.342);">28</span>
<span class="t m k" style="left:1378.5px;top:148.1px;font-size:19px;color:#14141f;transform:scaleX(1.342);">00</span>
<span class="t m k" style="left:1378.5px;top:185.3px;font-size:19px;color:#14141f;transform:scaleX(1.342);">2E</span>
<span class="t m k" style="left:1378.5px;top:222.4px;font-size:19px;color:#14141f;transform:scaleX(1.342);">00</span>
<span class="t m k" style="left:1378.5px;top:259.6px;font-size:19px;color:#14141f;transform:scaleX(1.342);">00</span>
<span class="t m k" style="left:1378.5px;top:296.7px;font-size:19px;color:#14141f;transform:scaleX(1.342);">60</span>
<span class="t m k" style="left:1378.5px;top:333.9px;font-size:19px;color:#14141f;transform:scaleX(1.342);">00</span>
<span class="t m k" style="left:1378.5px;top:371.1px;font-size:19px;color:#14141f;transform:scaleX(1.342);">2E</span>
<span class="t m k" style="left:1378.5px;top:408.2px;font-size:19px;color:#14141f;transform:scaleX(1.342);">00</span>
<span class="t m k" style="left:1378.5px;top:445.4px;font-size:19px;color:#14141f;transform:scaleX(1.342);">00</span>
<span class="t m k" style="left:1378.5px;top:482.5px;font-size:19px;color:#a6a6be;transform:scaleX(1.342);">00</span>
<span class="t m b" style="left:1433.0px;top:72.4px;font-size:19px;color:#111;transform:scaleX(1.342);">9</span>
<div style="left:1463.4px;top:60.4px;width:1.8px;height:36.0px;background:#dcdde1;"></div>
<span class="t m k" style="left:1426.7px;top:110.9px;font-size:19px;color:#14141f;transform:scaleX(1.342);">38</span>
<span class="t m k" style="left:1426.7px;top:148.1px;font-size:19px;color:#14141f;transform:scaleX(1.342);">00</span>
<span class="t m k" style="left:1426.7px;top:185.3px;font-size:19px;color:#14141f;transform:scaleX(1.342);">72</span>
<span class="t m k" style="left:1426.7px;top:222.4px;font-size:19px;color:#14141f;transform:scaleX(1.342);">A2</span>
<span class="t m k" style="left:1426.7px;top:259.6px;font-size:19px;color:#14141f;transform:scaleX(1.342);">00</span>
<span class="t m k" style="left:1426.7px;top:296.7px;font-size:19px;color:#14141f;transform:scaleX(1.342);">00</span>
<span class="t m k" style="left:1426.7px;top:333.9px;font-size:19px;color:#14141f;transform:scaleX(1.342);">00</span>
<span class="t m k" style="left:1426.7px;top:371.1px;font-size:19px;color:#14141f;transform:scaleX(1.342);">70</span>
<span class="t m k" style="left:1426.7px;top:408.2px;font-size:19px;color:#14141f;transform:scaleX(1.342);">02</span>
<span class="t m k" style="left:1426.7px;top:445.4px;font-size:19px;color:#14141f;transform:scaleX(1.342);">00</span>
<span class="t m k" style="left:1426.7px;top:482.5px;font-size:19px;color:#a6a6be;transform:scaleX(1.342);">00</span>
<span class="t m b" style="left:1481.2px;top:72.4px;font-size:19px;color:#111;transform:scaleX(1.342);">A</span>
<div style="left:1511.6px;top:60.4px;width:1.8px;height:36.0px;background:#dcdde1;"></div>
<span class="t m k" style="left:1474.9px;top:110.9px;font-size:19px;color:#14141f;transform:scaleX(1.342);">00</span>
<span class="t m k" style="left:1474.9px;top:148.1px;font-size:19px;color:#14141f;transform:scaleX(1.342);">00</span>
<span class="t m k" style="left:1474.9px;top:185.3px;font-size:19px;color:#14141f;transform:scaleX(1.342);">64</span>
<span class="t m k" style="left:1474.9px;top:222.4px;font-size:19px;color:#14141f;transform:scaleX(1.342);">00</span>
<span class="t m k" style="left:1474.9px;top:259.6px;font-size:19px;color:#14141f;transform:scaleX(1.342);">00</span>
<span class="t m k" style="left:1474.9px;top:296.7px;font-size:19px;color:#14141f;transform:scaleX(1.342);">00</span>
<span class="t m k" style="left:1474.9px;top:333.9px;font-size:19px;color:#14141f;transform:scaleX(1.342);">00</span>
<span class="t m k" style="left:1474.9px;top:371.1px;font-size:19px;color:#14141f;transform:scaleX(1.342);">64</span>
<span class="t m k" style="left:1474.9px;top:408.2px;font-size:19px;color:#14141f;transform:scaleX(1.342);">00</span>
<span class="t m k" style="left:1474.9px;top:445.4px;font-size:19px;color:#14141f;transform:scaleX(1.342);">00</span>
<span class="t m k" style="left:1474.9px;top:482.5px;font-size:19px;color:#a6a6be;transform:scaleX(1.342);">00</span>
<span class="t m b" style="left:1529.4px;top:72.4px;font-size:19px;color:#111;transform:scaleX(1.342);">B</span>
<div style="left:1559.8px;top:60.4px;width:1.8px;height:36.0px;background:#dcdde1;"></div>
<span class="t m k" style="left:1523.1px;top:110.9px;font-size:19px;color:#14141f;transform:scaleX(1.342);">00</span>
<span class="t m k" style="left:1523.1px;top:148.1px;font-size:19px;color:#14141f;transform:scaleX(1.342);">00</span>
<span class="t m k" style="left:1523.1px;top:185.3px;font-size:19px;color:#14141f;transform:scaleX(1.342);">61</span>
<span class="t m k" style="left:1523.1px;top:222.4px;font-size:19px;color:#14141f;transform:scaleX(1.342);">00</span>
<span class="t m k" style="left:1523.1px;top:259.6px;font-size:19px;color:#14141f;transform:scaleX(1.342);">00</span>
<span class="t m k" style="left:1523.1px;top:296.7px;font-size:19px;color:#14141f;transform:scaleX(1.342);">00</span>
<span class="t m k" style="left:1523.1px;top:333.9px;font-size:19px;color:#14141f;transform:scaleX(1.342);">00</span>
<span class="t m k" style="left:1523.1px;top:371.1px;font-size:19px;color:#14141f;transform:scaleX(1.342);">61</span>
<span class="t m k" style="left:1523.1px;top:408.2px;font-size:19px;color:#14141f;transform:scaleX(1.342);">00</span>
<span class="t m k" style="left:1523.1px;top:445.4px;font-size:19px;color:#14141f;transform:scaleX(1.342);">00</span>
<span class="t m k" style="left:1523.1px;top:482.5px;font-size:19px;color:#a6a6be;transform:scaleX(1.342);">00</span>
<span class="t m b" style="left:1577.6px;top:72.4px;font-size:19px;color:#111;transform:scaleX(1.342);">C</span>
<div style="left:1608.0px;top:60.4px;width:1.8px;height:36.0px;background:#dcdde1;"></div>
<span class="t m k" style="left:1571.3px;top:110.9px;font-size:19px;color:#14141f;transform:scaleX(1.342);">00</span>
<span class="t m k" style="left:1571.3px;top:148.1px;font-size:19px;color:#14141f;transform:scaleX(1.342);">00</span>
<span class="t m k" style="left:1571.3px;top:185.3px;font-size:19px;color:#14141f;transform:scaleX(1.342);">74</span>
<span class="t m k" style="left:1571.3px;top:222.4px;font-size:19px;color:#14141f;transform:scaleX(1.342);">00</span>
<span class="t m k" style="left:1571.3px;top:259.6px;font-size:19px;color:#14141f;transform:scaleX(1.342);">40</span>
<span class="t m k" style="left:1571.3px;top:296.7px;font-size:19px;color:#14141f;transform:scaleX(1.342);">00</span>
<span class="t m k" style="left:1571.3px;top:333.9px;font-size:19px;color:#14141f;transform:scaleX(1.342);">00</span>
<span class="t m k" style="left:1571.3px;top:371.1px;font-size:19px;color:#14141f;transform:scaleX(1.342);">74</span>
<span class="t m k" style="left:1571.3px;top:408.2px;font-size:19px;color:#14141f;transform:scaleX(1.342);">00</span>
<span class="t m k" style="left:1571.3px;top:445.4px;font-size:19px;color:#14141f;transform:scaleX(1.342);">40</span>
<span class="t m k" style="left:1571.3px;top:482.5px;font-size:19px;color:#a6a6be;transform:scaleX(1.342);">00</span>
<span class="t m b" style="left:1625.8px;top:72.4px;font-size:19px;color:#111;transform:scaleX(1.342);">D</span>
<div style="left:1656.2px;top:60.4px;width:1.8px;height:36.0px;background:#dcdde1;"></div>
<span class="t m k" style="left:1619.5px;top:110.9px;font-size:19px;color:#14141f;transform:scaleX(1.342);">10</span>
<span class="t m k" style="left:1619.5px;top:148.1px;font-size:19px;color:#14141f;transform:scaleX(1.342);">00</span>
<span class="t m k" style="left:1619.5px;top:185.3px;font-size:19px;color:#14141f;transform:scaleX(1.342);">61</span>
<span class="t m k" style="left:1619.5px;top:222.4px;font-size:19px;color:#14141f;transform:scaleX(1.342);">3E</span>
<span class="t m k" style="left:1619.5px;top:259.6px;font-size:19px;color:#14141f;transform:scaleX(1.342);">00</span>
<span class="t m k" style="left:1619.5px;top:296.7px;font-size:19px;color:#14141f;transform:scaleX(1.342);">00</span>
<span class="t m k" style="left:1619.5px;top:333.9px;font-size:19px;color:#14141f;transform:scaleX(1.342);">00</span>
<span class="t m k" style="left:1619.5px;top:371.1px;font-size:19px;color:#14141f;transform:scaleX(1.342);">61</span>
<span class="t m k" style="left:1619.5px;top:408.2px;font-size:19px;color:#14141f;transform:scaleX(1.342);">E2</span>
<span class="t m k" style="left:1619.5px;top:445.4px;font-size:19px;color:#14141f;transform:scaleX(1.342);">00</span>
<span class="t m k" style="left:1619.5px;top:482.5px;font-size:19px;color:#a6a6be;transform:scaleX(1.342);">00</span>
<span class="t m b" style="left:1674.0px;top:72.4px;font-size:19px;color:#111;transform:scaleX(1.342);">E</span>
<div style="left:1704.4px;top:60.4px;width:1.8px;height:36.0px;background:#dcdde1;"></div>
<span class="t m k" style="left:1667.7px;top:110.9px;font-size:19px;color:#14141f;transform:scaleX(1.342);">00</span>
<span class="t m k" style="left:1667.7px;top:148.1px;font-size:19px;color:#14141f;transform:scaleX(1.342);">00</span>
<span class="t m k" style="left:1667.7px;top:185.3px;font-size:19px;color:#14141f;transform:scaleX(1.342);">00</span>
<span class="t m k" style="left:1667.7px;top:222.4px;font-size:19px;color:#14141f;transform:scaleX(1.342);">00</span>
<span class="t m k" style="left:1667.7px;top:259.6px;font-size:19px;color:#14141f;transform:scaleX(1.342);">00</span>
<span class="t m k" style="left:1667.7px;top:296.7px;font-size:19px;color:#14141f;transform:scaleX(1.342);">01</span>
<span class="t m k" style="left:1667.7px;top:333.9px;font-size:19px;color:#14141f;transform:scaleX(1.342);">00</span>
<span class="t m k" style="left:1667.7px;top:371.1px;font-size:19px;color:#14141f;transform:scaleX(1.342);">00</span>
<span class="t m k" style="left:1667.7px;top:408.2px;font-size:19px;color:#14141f;transform:scaleX(1.342);">00</span>
<span class="t m k" style="left:1667.7px;top:445.4px;font-size:19px;color:#14141f;transform:scaleX(1.342);">00</span>
<span class="t m k" style="left:1667.7px;top:482.5px;font-size:19px;color:#a6a6be;transform:scaleX(1.342);">00</span>
<span class="t m b" style="left:1722.2px;top:72.4px;font-size:19px;color:#111;transform:scaleX(1.342);">F</span>
<div style="left:1752.6px;top:60.4px;width:1.8px;height:36.0px;background:#dcdde1;"></div>
<span class="t m k" style="left:1715.9px;top:110.9px;font-size:19px;color:#14141f;transform:scaleX(1.342);">00</span>
<span class="t m k" style="left:1715.9px;top:148.1px;font-size:19px;color:#14141f;transform:scaleX(1.342);">00</span>
<span class="t m k" style="left:1715.9px;top:185.3px;font-size:19px;color:#14141f;transform:scaleX(1.342);">00</span>
<span class="t m k" style="left:1715.9px;top:222.4px;font-size:19px;color:#14141f;transform:scaleX(1.342);">00</span>
<span class="t m k" style="left:1715.9px;top:259.6px;font-size:19px;color:#14141f;transform:scaleX(1.342);">40</span>
<span class="t m k" style="left:1715.9px;top:296.7px;font-size:19px;color:#14141f;transform:scaleX(1.342);">00</span>
<span class="t m k" style="left:1715.9px;top:333.9px;font-size:19px;color:#14141f;transform:scaleX(1.342);">00</span>
<span class="t m k" style="left:1715.9px;top:371.1px;font-size:19px;color:#14141f;transform:scaleX(1.342);">00</span>
<span class="t m k" style="left:1715.9px;top:408.2px;font-size:19px;color:#14141f;transform:scaleX(1.342);">00</span>
<span class="t m k" style="left:1715.9px;top:445.4px;font-size:19px;color:#14141f;transform:scaleX(1.342);">40</span>
<span class="t m k" style="left:1715.9px;top:482.5px;font-size:19px;color:#a6a6be;transform:scaleX(1.342);">00</span>
<div style="left:982.0px;top:60.4px;width:1.8px;height:36.0px;background:#dcdde1;"></div>
<div style="left:2243.8px;top:56.0px;width:1393.6px;height:464.0px;background:#fff;border:3px solid #828a96;"></div>
<div style="left:2246.4px;top:59.6px;width:1337.2px;height:39.0px;background:linear-gradient(180deg,#fff 0,#fff 38%,#f3f4f6 40%,#f1f2f5 100%);border-bottom:2.2px solid #d6d7da;"></div>
<div style="left:2246.4px;top:100.5px;width:1337.2px;height:416.9px;background:#00008b;"></div>
<span class="t m b" style="left:2258.3px;top:72.4px;font-size:19px;color:#111;transform:scaleX(1.342);">0</span>
<div style="left:2283.5px;top:60.4px;width:1.8px;height:36.0px;background:#dcdde1;"></div>
<span class="t m b" style="left:2254.9px;top:113.7px;font-size:16px;color:#fff;transform:scaleX(1.780);">.</span>
<span class="t m b" style="left:2254.9px;top:150.9px;font-size:16px;color:#fff;transform:scaleX(1.780);">.</span>
<span class="t m b" style="left:2254.9px;top:188.1px;font-size:16px;color:#fff;transform:scaleX(1.780);">.</span>
<span class="t m b" style="left:2255.8px;top:222.9px;font-size:19px;color:#fff;transform:scaleX(1.342);">¶</span>
<span class="t m b" style="left:2254.9px;top:262.4px;font-size:16px;color:#fff;transform:scaleX(1.780);">.</span>
<span class="t m b" style="left:2254.9px;top:299.5px;font-size:16px;color:#fff;transform:scaleX(1.780);">.</span>
<span class="t m b" style="left:2254.9px;top:336.7px;font-size:16px;color:#fff;transform:scaleX(1.780);">.</span>
<span class="t m b" style="left:2254.9px;top:373.9px;font-size:16px;color:#fff;transform:scaleX(1.780);">.</span>
<span class="t m b" style="left:2255.8px;top:408.7px;font-size:19px;color:#fff;transform:scaleX(1.342);">Ì</span>
<span class="t m b" style="left:2254.9px;top:448.2px;font-size:16px;color:#fff;transform:scaleX(1.780);">.</span>
<span class="t m b" style="left:2254.9px;top:485.3px;font-size:16px;color:#5d5db0;transform:scaleX(1.780);">.</span>
<span class="t m b" style="left:2297.4px;top:72.4px;font-size:19px;color:#111;transform:scaleX(1.342);">1</span>
<div style="left:2322.6px;top:60.4px;width:1.8px;height:36.0px;background:#dcdde1;"></div>
<span class="t m b" style="left:2294.0px;top:113.7px;font-size:16px;color:#fff;transform:scaleX(1.780);">t</span>
<span class="t m b" style="left:2294.0px;top:150.9px;font-size:16px;color:#fff;transform:scaleX(1.780);">:</span>
<span class="t m b" style="left:2294.0px;top:188.1px;font-size:16px;color:#fff;transform:scaleX(1.780);">.</span>
<span class="t m b" style="left:2294.9px;top:222.9px;font-size:19px;color:#fff;transform:scaleX(1.342);">¡</span>
<span class="t m b" style="left:2294.0px;top:262.4px;font-size:16px;color:#fff;transform:scaleX(1.780);">.</span>
<span class="t m b" style="left:2294.0px;top:299.5px;font-size:16px;color:#fff;transform:scaleX(1.780);">d</span>
<span class="t m b" style="left:2294.0px;top:336.7px;font-size:16px;color:#fff;transform:scaleX(1.780);">.</span>
<span class="t m b" style="left:2294.0px;top:373.9px;font-size:16px;color:#fff;transform:scaleX(1.780);">.</span>
<span class="t m b" style="left:2294.0px;top:411.0px;font-size:16px;color:#fff;transform:scaleX(1.780);">.</span>
<span class="t m b" style="left:2294.0px;top:448.2px;font-size:16px;color:#fff;transform:scaleX(1.780);">.</span>
<span class="t m b" style="left:2294.0px;top:485.3px;font-size:16px;color:#5d5db0;transform:scaleX(1.780);">.</span>
<span class="t m b" style="left:2336.5px;top:72.4px;font-size:19px;color:#111;transform:scaleX(1.342);">2</span>
<div style="left:2361.7px;top:60.4px;width:1.8px;height:36.0px;background:#dcdde1;"></div>
<span class="t m b" style="left:2333.1px;top:113.7px;font-size:16px;color:#fff;transform:scaleX(1.780);">e</span>
<span class="t m b" style="left:2333.1px;top:150.9px;font-size:16px;color:#fff;transform:scaleX(1.780);">.</span>
<span class="t m b" style="left:2333.1px;top:188.1px;font-size:16px;color:#fff;transform:scaleX(1.780);">.</span>
<span class="t m b" style="left:2333.1px;top:225.2px;font-size:16px;color:#fff;transform:scaleX(1.780);">.</span>
<span class="t m b" style="left:2333.1px;top:262.4px;font-size:16px;color:#fff;transform:scaleX(1.780);">.</span>
<span class="t m b" style="left:2333.1px;top:299.5px;font-size:16px;color:#fff;transform:scaleX(1.780);">a</span>
<span class="t m b" style="left:2333.1px;top:336.7px;font-size:16px;color:#fff;transform:scaleX(1.780);">.</span>
<span class="t m b" style="left:2333.1px;top:373.9px;font-size:16px;color:#fff;transform:scaleX(1.780);">.</span>
<span class="t m b" style="left:2333.1px;top:411.0px;font-size:16px;color:#fff;transform:scaleX(1.780);">.</span>
<span class="t m b" style="left:2333.1px;top:448.2px;font-size:16px;color:#fff;transform:scaleX(1.780);">.</span>
<span class="t m b" style="left:2333.1px;top:485.3px;font-size:16px;color:#5d5db0;transform:scaleX(1.780);">.</span>
<span class="t m b" style="left:2375.6px;top:72.4px;font-size:19px;color:#111;transform:scaleX(1.342);">3</span>
<div style="left:2400.8px;top:60.4px;width:1.8px;height:36.0px;background:#dcdde1;"></div>
<span class="t m b" style="left:2372.2px;top:113.7px;font-size:16px;color:#fff;transform:scaleX(1.780);">x</span>
<span class="t m b" style="left:2372.2px;top:150.9px;font-size:16px;color:#fff;transform:scaleX(1.780);">.</span>
<span class="t m b" style="left:2372.2px;top:188.1px;font-size:16px;color:#fff;transform:scaleX(1.780);">.</span>
<span class="t m b" style="left:2372.2px;top:225.2px;font-size:16px;color:#fff;transform:scaleX(1.780);">.</span>
<span class="t m b" style="left:2372.2px;top:262.4px;font-size:16px;color:#fff;transform:scaleX(1.780);">.</span>
<span class="t m b" style="left:2372.2px;top:299.5px;font-size:16px;color:#fff;transform:scaleX(1.780);">t</span>
<span class="t m b" style="left:2372.2px;top:336.7px;font-size:16px;color:#fff;transform:scaleX(1.780);">.</span>
<span class="t m b" style="left:2372.2px;top:373.9px;font-size:16px;color:#fff;transform:scaleX(1.780);">.</span>
<span class="t m b" style="left:2372.2px;top:411.0px;font-size:16px;color:#fff;transform:scaleX(1.780);">.</span>
<span class="t m b" style="left:2372.2px;top:448.2px;font-size:16px;color:#fff;transform:scaleX(1.780);">.</span>
<span class="t m b" style="left:2372.2px;top:485.3px;font-size:16px;color:#5d5db0;transform:scaleX(1.780);">.</span>
<span class="t m b" style="left:2414.7px;top:72.4px;font-size:19px;color:#111;transform:scaleX(1.342);">4</span>
<div style="left:2439.9px;top:60.4px;width:1.8px;height:36.0px;background:#dcdde1;"></div>
<span class="t m b" style="left:2411.3px;top:113.7px;font-size:16px;color:#fff;transform:scaleX(1.780);">t</span>
<span class="t m b" style="left:2411.3px;top:150.9px;font-size:16px;color:#fff;transform:scaleX(1.780);">.</span>
<span class="t m b" style="left:2411.3px;top:188.1px;font-size:16px;color:#fff;transform:scaleX(1.780);">.</span>
<span class="t m b" style="left:2411.3px;top:225.2px;font-size:16px;color:#fff;transform:scaleX(1.780);">.</span>
<span class="t m b" style="left:2411.3px;top:262.4px;font-size:16px;color:#fff;transform:scaleX(1.780);">.</span>
<span class="t m b" style="left:2411.3px;top:299.5px;font-size:16px;color:#fff;transform:scaleX(1.780);">a</span>
<span class="t m b" style="left:2411.3px;top:336.7px;font-size:16px;color:#fff;transform:scaleX(1.780);">.</span>
<span class="t m b" style="left:2412.2px;top:371.6px;font-size:19px;color:#fff;transform:scaleX(1.342);">@</span>
<span class="t m b" style="left:2411.3px;top:411.0px;font-size:16px;color:#fff;transform:scaleX(1.780);">.</span>
<span class="t m b" style="left:2411.3px;top:448.2px;font-size:16px;color:#fff;transform:scaleX(1.780);">.</span>
<span class="t m b" style="left:2411.3px;top:485.3px;font-size:16px;color:#5d5db0;transform:scaleX(1.780);">.</span>
<span class="t m b" style="left:2453.8px;top:72.4px;font-size:19px;color:#111;transform:scaleX(1.342);">5</span>
<div style="left:2479.0px;top:60.4px;width:1.8px;height:36.0px;background:#dcdde1;"></div>
<span class="t m b" style="left:2450.4px;top:113.7px;font-size:16px;color:#fff;transform:scaleX(1.780);">.</span>
<span class="t m b" style="left:2450.4px;top:150.9px;font-size:16px;color:#fff;transform:scaleX(1.780);">.</span>
<span class="t m b" style="left:2450.4px;top:188.1px;font-size:16px;color:#fff;transform:scaleX(1.780);">.</span>
<span class="t m b" style="left:2451.3px;top:222.9px;font-size:19px;color:#fff;transform:scaleX(1.342);">P</span>
<span class="t m b" style="left:2450.4px;top:262.4px;font-size:16px;color:#fff;transform:scaleX(1.780);">.</span>
<span class="t m b" style="left:2450.4px;top:299.5px;font-size:16px;color:#fff;transform:scaleX(1.780);">.</span>
<span class="t m b" style="left:2450.4px;top:336.7px;font-size:16px;color:#fff;transform:scaleX(1.780);">à</span>
<span class="t m b" style="left:2450.4px;top:373.9px;font-size:16px;color:#fff;transform:scaleX(1.780);">.</span>
<span class="t m b" style="left:2450.4px;top:411.0px;font-size:16px;color:#fff;transform:scaleX(1.780);">.</span>
<span class="t m b" style="left:2450.4px;top:448.2px;font-size:16px;color:#fff;transform:scaleX(1.780);">.</span>
<span class="t m b" style="left:2450.4px;top:485.3px;font-size:16px;color:#5d5db0;transform:scaleX(1.780);">.</span>
<span class="t m b" style="left:2492.9px;top:72.4px;font-size:19px;color:#111;transform:scaleX(1.342);">6</span>
<div style="left:2518.1px;top:60.4px;width:1.8px;height:36.0px;background:#dcdde1;"></div>
<span class="t m b" style="left:2489.5px;top:113.7px;font-size:16px;color:#fff;transform:scaleX(1.780);">.</span>
<span class="t m b" style="left:2489.5px;top:150.9px;font-size:16px;color:#fff;transform:scaleX(1.780);">.</span>
<span class="t m b" style="left:2489.5px;top:188.1px;font-size:16px;color:#fff;transform:scaleX(1.780);">.</span>
<span class="t m b" style="left:2489.5px;top:225.2px;font-size:16px;color:#fff;transform:scaleX(1.780);">.</span>
<span class="t m b" style="left:2489.5px;top:262.4px;font-size:16px;color:#fff;transform:scaleX(1.780);">.</span>
<span class="t m b" style="left:2489.5px;top:299.5px;font-size:16px;color:#fff;transform:scaleX(1.780);">.</span>
<span class="t m b" style="left:2489.5px;top:336.7px;font-size:16px;color:#fff;transform:scaleX(1.780);">.</span>
<span class="t m b" style="left:2489.5px;top:373.9px;font-size:16px;color:#fff;transform:scaleX(1.780);">.</span>
<span class="t m b" style="left:2489.5px;top:411.0px;font-size:16px;color:#fff;transform:scaleX(1.780);">.</span>
<span class="t m b" style="left:2489.5px;top:448.2px;font-size:16px;color:#fff;transform:scaleX(1.780);">.</span>
<span class="t m b" style="left:2489.5px;top:485.3px;font-size:16px;color:#5d5db0;transform:scaleX(1.780);">.</span>
<span class="t m b" style="left:2532.0px;top:72.4px;font-size:19px;color:#111;transform:scaleX(1.342);">7</span>
<div style="left:2557.2px;top:60.4px;width:1.8px;height:36.0px;background:#dcdde1;"></div>
<span class="t m b" style="left:2528.6px;top:113.7px;font-size:16px;color:#fff;transform:scaleX(1.780);">.</span>
<span class="t m b" style="left:2528.6px;top:150.9px;font-size:16px;color:#fff;transform:scaleX(1.780);">.</span>
<span class="t m b" style="left:2528.6px;top:188.1px;font-size:16px;color:#fff;transform:scaleX(1.780);">`</span>
<span class="t m b" style="left:2528.6px;top:225.2px;font-size:16px;color:#fff;transform:scaleX(1.780);">.</span>
<span class="t m b" style="left:2528.6px;top:262.4px;font-size:16px;color:#fff;transform:scaleX(1.780);">.</span>
<span class="t m b" style="left:2528.6px;top:299.5px;font-size:16px;color:#fff;transform:scaleX(1.780);">.</span>
<span class="t m b" style="left:2528.6px;top:336.7px;font-size:16px;color:#fff;transform:scaleX(1.780);">.</span>
<span class="t m b" style="left:2529.5px;top:371.6px;font-size:19px;color:#fff;transform:scaleX(1.342);">À</span>
<span class="t m b" style="left:2528.6px;top:411.0px;font-size:16px;color:#fff;transform:scaleX(1.780);">.</span>
<span class="t m b" style="left:2528.6px;top:448.2px;font-size:16px;color:#fff;transform:scaleX(1.780);">.</span>
<span class="t m b" style="left:2528.6px;top:485.3px;font-size:16px;color:#5d5db0;transform:scaleX(1.780);">.</span>
<span class="t m b" style="left:2571.1px;top:72.4px;font-size:19px;color:#111;transform:scaleX(1.342);">8</span>
<div style="left:2596.3px;top:60.4px;width:1.8px;height:36.0px;background:#dcdde1;"></div>
<span class="t m b" style="left:2568.6px;top:111.4px;font-size:19px;color:#fff;transform:scaleX(1.342);">(</span>
<span class="t m b" style="left:2567.7px;top:150.9px;font-size:16px;color:#fff;transform:scaleX(1.780);">.</span>
<span class="t m b" style="left:2567.7px;top:188.1px;font-size:16px;color:#fff;transform:scaleX(1.780);">.</span>
<span class="t m b" style="left:2567.7px;top:225.2px;font-size:16px;color:#fff;transform:scaleX(1.780);">.</span>
<span class="t m b" style="left:2567.7px;top:262.4px;font-size:16px;color:#fff;transform:scaleX(1.780);">.</span>
<span class="t m b" style="left:2567.7px;top:299.5px;font-size:16px;color:#fff;transform:scaleX(1.780);">`</span>
<span class="t m b" style="left:2567.7px;top:336.7px;font-size:16px;color:#fff;transform:scaleX(1.780);">.</span>
<span class="t m b" style="left:2567.7px;top:373.9px;font-size:16px;color:#fff;transform:scaleX(1.780);">.</span>
<span class="t m b" style="left:2567.7px;top:411.0px;font-size:16px;color:#fff;transform:scaleX(1.780);">.</span>
<span class="t m b" style="left:2567.7px;top:448.2px;font-size:16px;color:#fff;transform:scaleX(1.780);">.</span>
<span class="t m b" style="left:2567.7px;top:485.3px;font-size:16px;color:#5d5db0;transform:scaleX(1.780);">.</span>
<span class="t m b" style="left:2610.2px;top:72.4px;font-size:19px;color:#111;transform:scaleX(1.342);">9</span>
<div style="left:2635.4px;top:60.4px;width:1.8px;height:36.0px;background:#dcdde1;"></div>
<span class="t m b" style="left:2607.7px;top:111.4px;font-size:19px;color:#fff;transform:scaleX(1.342);">8</span>
<span class="t m b" style="left:2606.8px;top:150.9px;font-size:16px;color:#fff;transform:scaleX(1.780);">.</span>
<span class="t m b" style="left:2606.8px;top:188.1px;font-size:16px;color:#fff;transform:scaleX(1.780);">r</span>
<span class="t m b" style="left:2607.7px;top:222.9px;font-size:19px;color:#fff;transform:scaleX(1.342);">¢</span>
<span class="t m b" style="left:2606.8px;top:262.4px;font-size:16px;color:#fff;transform:scaleX(1.780);">.</span>
<span class="t m b" style="left:2606.8px;top:299.5px;font-size:16px;color:#fff;transform:scaleX(1.780);">.</span>
<span class="t m b" style="left:2606.8px;top:336.7px;font-size:16px;color:#fff;transform:scaleX(1.780);">.</span>
<span class="t m b" style="left:2606.8px;top:373.9px;font-size:16px;color:#fff;transform:scaleX(1.780);">p</span>
<span class="t m b" style="left:2606.8px;top:411.0px;font-size:16px;color:#fff;transform:scaleX(1.780);">.</span>
<span class="t m b" style="left:2606.8px;top:448.2px;font-size:16px;color:#fff;transform:scaleX(1.780);">.</span>
<span class="t m b" style="left:2606.8px;top:485.3px;font-size:16px;color:#5d5db0;transform:scaleX(1.780);">.</span>
<span class="t m b" style="left:2649.3px;top:72.4px;font-size:19px;color:#111;transform:scaleX(1.342);">A</span>
<div style="left:2674.5px;top:60.4px;width:1.8px;height:36.0px;background:#dcdde1;"></div>
<span class="t m b" style="left:2645.9px;top:113.7px;font-size:16px;color:#fff;transform:scaleX(1.780);">.</span>
<span class="t m b" style="left:2645.9px;top:150.9px;font-size:16px;color:#fff;transform:scaleX(1.780);">.</span>
<span class="t m b" style="left:2645.9px;top:188.1px;font-size:16px;color:#fff;transform:scaleX(1.780);">d</span>
<span class="t m b" style="left:2645.9px;top:225.2px;font-size:16px;color:#fff;transform:scaleX(1.780);">.</span>
<span class="t m b" style="left:2645.9px;top:262.4px;font-size:16px;color:#fff;transform:scaleX(1.780);">.</span>
<span class="t m b" style="left:2645.9px;top:299.5px;font-size:16px;color:#fff;transform:scaleX(1.780);">.</span>
<span class="t m b" style="left:2645.9px;top:336.7px;font-size:16px;color:#fff;transform:scaleX(1.780);">.</span>
<span class="t m b" style="left:2645.9px;top:373.9px;font-size:16px;color:#fff;transform:scaleX(1.780);">d</span>
<span class="t m b" style="left:2645.9px;top:411.0px;font-size:16px;color:#fff;transform:scaleX(1.780);">.</span>
<span class="t m b" style="left:2645.9px;top:448.2px;font-size:16px;color:#fff;transform:scaleX(1.780);">.</span>
<span class="t m b" style="left:2645.9px;top:485.3px;font-size:16px;color:#5d5db0;transform:scaleX(1.780);">.</span>
<span class="t m b" style="left:2688.4px;top:72.4px;font-size:19px;color:#111;transform:scaleX(1.342);">B</span>
<div style="left:2713.6px;top:60.4px;width:1.8px;height:36.0px;background:#dcdde1;"></div>
<span class="t m b" style="left:2685.0px;top:113.7px;font-size:16px;color:#fff;transform:scaleX(1.780);">.</span>
<span class="t m b" style="left:2685.0px;top:150.9px;font-size:16px;color:#fff;transform:scaleX(1.780);">.</span>
<span class="t m b" style="left:2685.0px;top:188.1px;font-size:16px;color:#fff;transform:scaleX(1.780);">a</span>
<span class="t m b" style="left:2685.0px;top:225.2px;font-size:16px;color:#fff;transform:scaleX(1.780);">.</span>
<span class="t m b" style="left:2685.0px;top:262.4px;font-size:16px;color:#fff;transform:scaleX(1.780);">.</span>
<span class="t m b" style="left:2685.0px;top:299.5px;font-size:16px;color:#fff;transform:scaleX(1.780);">.</span>
<span class="t m b" style="left:2685.0px;top:336.7px;font-size:16px;color:#fff;transform:scaleX(1.780);">.</span>
<span class="t m b" style="left:2685.0px;top:373.9px;font-size:16px;color:#fff;transform:scaleX(1.780);">a</span>
<span class="t m b" style="left:2685.0px;top:411.0px;font-size:16px;color:#fff;transform:scaleX(1.780);">.</span>
<span class="t m b" style="left:2685.0px;top:448.2px;font-size:16px;color:#fff;transform:scaleX(1.780);">.</span>
<span class="t m b" style="left:2685.0px;top:485.3px;font-size:16px;color:#5d5db0;transform:scaleX(1.780);">.</span>
<span class="t m b" style="left:2727.5px;top:72.4px;font-size:19px;color:#111;transform:scaleX(1.342);">C</span>
<div style="left:2752.7px;top:60.4px;width:1.8px;height:36.0px;background:#dcdde1;"></div>
<span class="t m b" style="left:2724.1px;top:113.7px;font-size:16px;color:#fff;transform:scaleX(1.780);">.</span>
<span class="t m b" style="left:2724.1px;top:150.9px;font-size:16px;color:#fff;transform:scaleX(1.780);">.</span>
<span class="t m b" style="left:2724.1px;top:188.1px;font-size:16px;color:#fff;transform:scaleX(1.780);">t</span>
<span class="t m b" style="left:2724.1px;top:225.2px;font-size:16px;color:#fff;transform:scaleX(1.780);">.</span>
<span class="t m b" style="left:2725.0px;top:260.1px;font-size:19px;color:#fff;transform:scaleX(1.342);">@</span>
<span class="t m b" style="left:2724.1px;top:299.5px;font-size:16px;color:#fff;transform:scaleX(1.780);">.</span>
<span class="t m b" style="left:2724.1px;top:336.7px;font-size:16px;color:#fff;transform:scaleX(1.780);">.</span>
<span class="t m b" style="left:2724.1px;top:373.9px;font-size:16px;color:#fff;transform:scaleX(1.780);">t</span>
<span class="t m b" style="left:2724.1px;top:411.0px;font-size:16px;color:#fff;transform:scaleX(1.780);">.</span>
<span class="t m b" style="left:2725.0px;top:445.9px;font-size:19px;color:#fff;transform:scaleX(1.342);">@</span>
<span class="t m b" style="left:2724.1px;top:485.3px;font-size:16px;color:#5d5db0;transform:scaleX(1.780);">.</span>
<span class="t m b" style="left:2766.6px;top:72.4px;font-size:19px;color:#111;transform:scaleX(1.342);">D</span>
<div style="left:2791.8px;top:60.4px;width:1.8px;height:36.0px;background:#dcdde1;"></div>
<span class="t m b" style="left:2763.2px;top:113.7px;font-size:16px;color:#fff;transform:scaleX(1.780);">.</span>
<span class="t m b" style="left:2763.2px;top:150.9px;font-size:16px;color:#fff;transform:scaleX(1.780);">.</span>
<span class="t m b" style="left:2763.2px;top:188.1px;font-size:16px;color:#fff;transform:scaleX(1.780);">a</span>
<span class="t m b" style="left:2764.1px;top:222.9px;font-size:19px;color:#fff;transform:scaleX(1.342);">&gt;</span>
<span class="t m b" style="left:2763.2px;top:262.4px;font-size:16px;color:#fff;transform:scaleX(1.780);">.</span>
<span class="t m b" style="left:2763.2px;top:299.5px;font-size:16px;color:#fff;transform:scaleX(1.780);">.</span>
<span class="t m b" style="left:2763.2px;top:336.7px;font-size:16px;color:#fff;transform:scaleX(1.780);">.</span>
<span class="t m b" style="left:2763.2px;top:373.9px;font-size:16px;color:#fff;transform:scaleX(1.780);">a</span>
<span class="t m b" style="left:2763.2px;top:411.0px;font-size:16px;color:#fff;transform:scaleX(1.780);">â</span>
<span class="t m b" style="left:2763.2px;top:448.2px;font-size:16px;color:#fff;transform:scaleX(1.780);">.</span>
<span class="t m b" style="left:2763.2px;top:485.3px;font-size:16px;color:#5d5db0;transform:scaleX(1.780);">.</span>
<span class="t m b" style="left:2805.7px;top:72.4px;font-size:19px;color:#111;transform:scaleX(1.342);">E</span>
<div style="left:2830.9px;top:60.4px;width:1.8px;height:36.0px;background:#dcdde1;"></div>
<span class="t m b" style="left:2802.3px;top:113.7px;font-size:16px;color:#fff;transform:scaleX(1.780);">.</span>
<span class="t m b" style="left:2802.3px;top:150.9px;font-size:16px;color:#fff;transform:scaleX(1.780);">.</span>
<span class="t m b" style="left:2802.3px;top:188.1px;font-size:16px;color:#fff;transform:scaleX(1.780);">.</span>
<span class="t m b" style="left:2802.3px;top:225.2px;font-size:16px;color:#fff;transform:scaleX(1.780);">.</span>
<span class="t m b" style="left:2802.3px;top:262.4px;font-size:16px;color:#fff;transform:scaleX(1.780);">.</span>
<span class="t m b" style="left:2802.3px;top:299.5px;font-size:16px;color:#fff;transform:scaleX(1.780);">.</span>
<span class="t m b" style="left:2802.3px;top:336.7px;font-size:16px;color:#fff;transform:scaleX(1.780);">.</span>
<span class="t m b" style="left:2802.3px;top:373.9px;font-size:16px;color:#fff;transform:scaleX(1.780);">.</span>
<span class="t m b" style="left:2802.3px;top:411.0px;font-size:16px;color:#fff;transform:scaleX(1.780);">.</span>
<span class="t m b" style="left:2802.3px;top:448.2px;font-size:16px;color:#fff;transform:scaleX(1.780);">.</span>
<span class="t m b" style="left:2802.3px;top:485.3px;font-size:16px;color:#5d5db0;transform:scaleX(1.780);">.</span>
<span class="t m b" style="left:2844.8px;top:72.4px;font-size:19px;color:#111;transform:scaleX(1.342);">F</span>
<div style="left:2870.0px;top:60.4px;width:1.8px;height:36.0px;background:#dcdde1;"></div>
<span class="t m b" style="left:2841.4px;top:113.7px;font-size:16px;color:#fff;transform:scaleX(1.780);">.</span>
<span class="t m b" style="left:2841.4px;top:150.9px;font-size:16px;color:#fff;transform:scaleX(1.780);">.</span>
<span class="t m b" style="left:2841.4px;top:188.1px;font-size:16px;color:#fff;transform:scaleX(1.780);">.</span>
<span class="t m b" style="left:2841.4px;top:225.2px;font-size:16px;color:#fff;transform:scaleX(1.780);">.</span>
<span class="t m b" style="left:2842.3px;top:260.1px;font-size:19px;color:#fff;transform:scaleX(1.342);">@</span>
<span class="t m b" style="left:2841.4px;top:299.5px;font-size:16px;color:#fff;transform:scaleX(1.780);">.</span>
<span class="t m b" style="left:2841.4px;top:336.7px;font-size:16px;color:#fff;transform:scaleX(1.780);">.</span>
<span class="t m b" style="left:2841.4px;top:373.9px;font-size:16px;color:#fff;transform:scaleX(1.780);">.</span>
<span class="t m b" style="left:2841.4px;top:411.0px;font-size:16px;color:#fff;transform:scaleX(1.780);">.</span>
<span class="t m b" style="left:2842.3px;top:445.9px;font-size:19px;color:#fff;transform:scaleX(1.342);">@</span>
<span class="t m b" style="left:2841.4px;top:485.3px;font-size:16px;color:#5d5db0;transform:scaleX(1.780);">.</span>
<div style="left:3583.6px;top:59.6px;width:51.0px;height:457.4px;background:linear-gradient(90deg,#e9e9e9 0,#f0f0f0 8px,#f0f0f0 100%);"></div>
<div style="left:3587.2px;top:96.8px;width:44.2px;height:126.6px;background:linear-gradient(90deg,#f6f6f6 0,#e8e8e8 40%,#d2d2d4 52%,#c6c6ca 100%);border:2.2px solid #9c9c9c;border-radius:5px;"></div>
<div style="left:3597.0px;top:151.5px;width:24.0px;height:2.4px;background:#6e6e6e;"></div>
<div style="left:3597.0px;top:156.5px;width:24.0px;height:2.4px;background:#6e6e6e;"></div>
<div style="left:3597.0px;top:161.5px;width:24.0px;height:2.4px;background:#6e6e6e;"></div>
<div style="left:3597.0px;top:166.5px;width:24.0px;height:2.4px;background:#6e6e6e;"></div>
<svg style="left:3598px;top:72.5px" width="28" height="11" viewBox="0 0 30 12"><path d="M2 11 L15 2 L28 11 Z" fill="#555"/></svg>
<svg style="left:3598px;top:495px" width="28" height="11" viewBox="0 0 30 12"><path d="M2 1 L15 10 L28 1 Z" fill="#555"/></svg>
<div style="left:1528.0px;top:437.5px;width:341.0px;height:35.0px;background:rgba(70,70,80,0.6);border-radius:5px;filter:blur(2.2px);"></div>
<div style="left:1523.0px;top:431.6px;width:340.4px;height:35.8px;background:linear-gradient(180deg,#fff 0,#fff 45%,#f1f1f6 100%);border:1.8px solid #777;border-radius:5px;"></div>
<span class="t s" style="left:1537.5px;top:439.4px;font-size:22px;color:#55556a;transform:scaleX(1.651);">Double-click to edit</span>
<div style="left:3630.6px;top:577.6px;width:6.8px;height:1000.0px;background:#fbfbfb;"></div>
<div style="left:834.4px;top:577.6px;width:2797.2px;height:1000.0px;background:#fff;border:3px solid #828a96;"></div>
<div style="left:840.7px;top:535.0px;width:2775.3px;height:43.0px;background:#aeb1b8;"></div>
<div style="left:840.7px;top:535.0px;width:172.5px;height:43.0px;background:linear-gradient(180deg,#f2f2f2 0,#ebebeb 48%,#dddddd 50%,#cfcfcf 100%);border:3px solid #788090;border-bottom:none;"></div>
<span class="t s" style="left:868.1px;top:549.2px;font-size:22px;color:#111;transform:scaleX(1.520);">Disasm</span>
<div style="left:1015.2px;top:535.0px;width:190.8px;height:43.0px;background:linear-gradient(180deg,#f2f2f2 0,#ebebeb 48%,#dddddd 50%,#cfcfcf 100%);border:3px solid #788090;border-bottom:none;"></div>
<span class="t s" style="left:1050.9px;top:549.2px;font-size:22px;color:#111;transform:scaleX(1.559);">General</span>
<div style="left:1208.0px;top:535.0px;width:204.7px;height:43.0px;background:linear-gradient(180deg,#f2f2f2 0,#ebebeb 48%,#dddddd 50%,#cfcfcf 100%);border:3px solid #788090;border-bottom:none;"></div>
<span class="t s" style="left:1241.8px;top:549.2px;font-size:22px;color:#111;transform:scaleX(1.526);">DOS Hdr</span>
<div style="left:1414.7px;top:535.0px;width:202.8px;height:43.0px;background:linear-gradient(180deg,#f2f2f2 0,#ebebeb 48%,#dddddd 50%,#cfcfcf 100%);border:3px solid #788090;border-bottom:none;"></div>
<span class="t s" style="left:1448.7px;top:549.2px;font-size:22px;color:#111;transform:scaleX(1.577);">Rich Hdr</span>
<div style="left:1619.5px;top:535.0px;width:189.5px;height:43.0px;background:linear-gradient(180deg,#f2f2f2 0,#ebebeb 48%,#dddddd 50%,#cfcfcf 100%);border:3px solid #788090;border-bottom:none;"></div>
<span class="t s" style="left:1653.2px;top:549.2px;font-size:22px;color:#111;transform:scaleX(1.581);">File Hdr</span>
<div style="left:1811.0px;top:535.0px;width:273.7px;height:43.0px;background:linear-gradient(180deg,#f2f2f2 0,#ebebeb 48%,#dddddd 50%,#cfcfcf 100%);border:3px solid #788090;border-bottom:none;"></div>
<span class="t s" style="left:1846.4px;top:549.2px;font-size:22px;color:#111;transform:scaleX(1.665);">Optional Hdr</span>
<div style="left:2086.7px;top:535.0px;width:266.5px;height:43.0px;background:linear-gradient(180deg,#f2f2f2 0,#ebebeb 48%,#dddddd 50%,#cfcfcf 100%);border:3px solid #788090;border-bottom:none;"></div>
<span class="t s" style="left:2122.9px;top:549.2px;font-size:22px;color:#111;transform:scaleX(1.552);">Section Hdrs</span>
<div style="left:2355.2px;top:535.0px;width:240.8px;height:43.0px;background:linear-gradient(180deg,#f2f2f2 0,#ebebeb 48%,#dddddd 50%,#cfcfcf 100%);border:3px solid #788090;border-bottom:none;"></div>
<span class="t s" style="left:2442.9px;top:549.2px;font-size:22px;color:#111;transform:scaleX(1.554);">Exports</span>
<svg style="left:2390.5px;top:545.2px" width="36" height="21" viewBox="0 0 36 21"><path d="M1.5 4 Q1.5 1 4.5 1 H13 L17 4 H32 Q35 4 35 7 V17 Q35 20 32 20 H4.5 Q1.5 20 1.5 17 Z" fill="#8c8c8c"/></svg>
<div style="left:2595.0px;top:531.7px;width:262.0px;height:50.0px;background:#fff;border:3px solid #788090;border-bottom:none;"></div>
<span class="t s" style="left:2686.7px;top:547.7px;font-size:22px;color:#111;transform:scaleX(1.655);">Imports</span>
<svg style="left:2635px;top:542.8px" width="36" height="21" viewBox="0 0 36 21"><path d="M1.5 4 Q1.5 1 4.5 1 H13 L17 4 H32 Q35 4 35 7 V17 Q35 20 32 20 H4.5 Q1.5 20 1.5 17 Z" fill="#8c8c8c"/></svg>
<div style="left:2856.0px;top:535.0px;width:275.5px;height:43.0px;background:linear-gradient(180deg,#f2f2f2 0,#ebebeb 48%,#dddddd 50%,#cfcfcf 100%);border:3px solid #788090;border-bottom:none;"></div>
<span class="t s" style="left:2939.1px;top:549.2px;font-size:22px;color:#111;transform:scaleX(1.573);">Exception</span>
<svg style="left:2885.8px;top:545.2px" width="36" height="21" viewBox="0 0 36 21"><path d="M1.5 4 Q1.5 1 4.5 1 H13 L17 4 H32 Q35 4 35 7 V17 Q35 20 32 20 H4.5 Q1.5 20 1.5 17 Z" fill="#8c8c8c"/></svg>
<div style="left:3133.5px;top:535.0px;width:250.5px;height:43.0px;background:linear-gradient(180deg,#f2f2f2 0,#ebebeb 48%,#dddddd 50%,#cfcfcf 100%);border:3px solid #788090;border-bottom:none;"></div>
<span class="t s" style="left:3223.0px;top:549.2px;font-size:22px;color:#111;transform:scaleX(1.517);">Security</span>
<svg style="left:3169.4px;top:545.2px" width="36" height="21" viewBox="0 0 36 21"><path d="M1.5 4 Q1.5 1 4.5 1 H13 L17 4 H32 Q35 4 35 7 V17 Q35 20 32 20 H4.5 Q1.5 20 1.5 17 Z" fill="#8c8c8c"/></svg>
<div style="left:3386.0px;top:535.0px;width:230.0px;height:43.0px;background:linear-gradient(180deg,#f2f2f2 0,#ebebeb 48%,#dddddd 50%,#cfcfcf 100%);border:3px solid #788090;border-bottom:none;"></div>
<span class="t s" style="left:3474.1px;top:549.2px;font-size:22px;color:#111;transform:scaleX(1.663);">Debug</span>
<svg style="left:3421px;top:545.2px" width="36" height="21" viewBox="0 0 36 21"><path d="M1.5 4 Q1.5 1 4.5 1 H13 L17 4 H32 Q35 4 35 7 V17 Q35 20 32 20 H4.5 Q1.5 20 1.5 17 Z" fill="#8c8c8c"/></svg>
<svg style="left:873px;top:594px" width="38" height="26" viewBox="0 0 38 26"><g fill="#7a7a7a"><path d="M19 1 L23 7 H15 Z"/><path d="M19 25 L23 19 H15 Z"/><path d="M1 13 L8 9.5 V16.5 Z"/><path d="M37 13 L30 9.5 V16.5 Z"/></g><path d="M19 6 V20 M7 13 H31" stroke="#9a9a9a" stroke-width="1.6" stroke-dasharray="2.5 2"/></svg>
<svg style="left:965px;top:594px" width="38" height="25" viewBox="0 0 38 25"><path d="M19 0.5 V24.5" stroke="#0a0a0a" stroke-width="5.6"/><path d="M1 12.5 H37" stroke="#0a0a0a" stroke-width="4.6"/></svg>
<svg style="left:1063px;top:594px" width="30" height="25" viewBox="0 0 30 25"><path d="M1 0.5 H20 L29 7 V24.5 H1 Z" fill="#0a0a0a"/><path d="M15 10 V21 M8 15.5 H22" stroke="#fff" stroke-width="3.4"/></svg>
<div style="left:839.6px;top:632.0px;width:2786.4px;height:11.0px;background:#f0f0f0;"></div>
<div style="left:840.4px;top:642.7px;width:2785.6px;height:528.5px;background:#fff;border:3px solid #828a96;"></div>
<div style="left:843.4px;top:645.7px;width:2777.6px;height:38.0px;background:linear-gradient(180deg,#fff 0,#fff 38%,#f3f4f6 40%,#f1f2f5 100%);border-bottom:1.6px solid #d9dadd;"></div>
<div style="left:1081.1px;top:645.7px;width:1.8px;height:37.0px;background:#d9dadd;"></div>
<div style="left:1381.1px;top:645.7px;width:1.8px;height:37.0px;background:#d9dadd;"></div>
<div style="left:1681.5px;top:645.7px;width:1.8px;height:37.0px;background:#d9dadd;"></div>
<div style="left:1982.1px;top:645.7px;width:1.8px;height:37.0px;background:#d9dadd;"></div>
<div style="left:2282.6px;top:645.7px;width:1.8px;height:37.0px;background:#d9dadd;"></div>
<div style="left:2583.5px;top:645.7px;width:1.8px;height:37.0px;background:#d9dadd;"></div>
<div style="left:2883.6px;top:645.7px;width:1.8px;height:37.0px;background:#d9dadd;"></div>
<div style="left:3184.5px;top:645.7px;width:1.8px;height:37.0px;background:#d9dadd;"></div>
<span class="t s" style="left:855.2px;top:657.0px;font-size:21.5px;color:#111;transform:scaleX(1.694);">Offset</span>
<span class="t s" style="left:1094.9px;top:657.0px;font-size:21.5px;color:#111;transform:scaleX(1.532);">Name</span>
<span class="t s" style="left:1394.2px;top:657.0px;font-size:21.5px;color:#111;transform:scaleX(1.631);">Func. Count</span>
<span class="t s" style="left:1694.7px;top:657.0px;font-size:21.5px;color:#111;transform:scaleX(1.655);">Bound?</span>
<div style="left:1990px;top:646px;width:292.5px;height:37px;overflow:hidden">
<span class="t s" style="left:7.4px;top:11.0px;font-size:21.5px;color:#111;transform:scaleX(1.654);">OriginalFirstThunk</span>
</div>
<span class="t s" style="left:2296.8px;top:657.0px;font-size:21.5px;color:#111;transform:scaleX(1.535);">TimeDateStamp</span>
<span class="t s" style="left:2596.6px;top:657.0px;font-size:21.5px;color:#111;transform:scaleX(1.642);">Forwarder</span>
<span class="t s" style="left:2896.9px;top:657.0px;font-size:21.5px;color:#111;transform:scaleX(1.515);">NameRVA</span>
<span class="t s" style="left:3196.7px;top:657.0px;font-size:21.5px;color:#111;transform:scaleX(1.617);">FirstThunk</span>
<span class="t s" style="left:851.5px;top:695.1px;font-size:21.5px;color:#1f8a1f;transform:scaleX(1.453);">DED4</span>
<span class="t s" style="left:1091.5px;top:695.1px;font-size:21.5px;color:#111;transform:scaleX(1.460);">KERNEL32.dll</span>
<span class="t s" style="left:1391.3px;top:695.1px;font-size:21.5px;color:#111;transform:scaleX(1.600);">6</span>
<span class="t s" style="left:1692.7px;top:695.1px;font-size:21.5px;color:#111;transform:scaleX(1.353);">FALSE</span>
<span class="t s" style="left:1993.9px;top:695.1px;font-size:21.5px;color:#1408f2;transform:scaleX(1.465);">F100</span>
<span class="t s" style="left:2292.6px;top:695.1px;font-size:21.5px;color:#111;transform:scaleX(1.647);">0</span>
<span class="t s" style="left:2593.3px;top:695.1px;font-size:21.5px;color:#111;transform:scaleX(1.676);">0</span>
<span class="t s" style="left:2894.5px;top:695.1px;font-size:21.5px;color:#1408f2;transform:scaleX(1.469);">F1A8</span>
<span class="t s" style="left:3196.3px;top:695.1px;font-size:21.5px;color:#1408f2;transform:scaleX(1.497);">5000</span>
<div style="left:838.4px;top:684.4px;width:2467.2px;height:47.4px;background:transparent;border:5px solid #e81c2a;"></div>
<div style="left:837.4px;top:1171.2px;width:2791.2px;height:57.0px;background:#f0f0f0;"></div>
<div style="left:840.5px;top:1183.6px;width:2785.1px;height:38.6px;background:#dadada;border:1.6px solid #c4c4c4;"></div>
<div style="left:840.5px;top:1222.2px;width:2785.1px;height:5.0px;background:#f5f5f5;"></div>
<span class="t s" style="left:853.4px;top:1196.3px;font-size:21.5px;color:#111;transform:scaleX(1.457);">KERNEL32.dll</span>
<span class="t s" style="left:1079.6px;top:1196.3px;font-size:21.5px;color:#111;transform:scaleX(1.596);">[ 6 entries ]</span>
<div style="left:840.4px;top:1227.0px;width:2785.6px;height:400.0px;background:#fff;border:3px solid #8e949e;"></div>
<div style="left:843.4px;top:1230.0px;width:2776.6px;height:36.4px;background:linear-gradient(180deg,#fff 0,#fff 38%,#f3f4f6 40%,#f1f2f5 100%);border-bottom:1.6px solid #d9dadd;"></div>
<div style="left:1080.9px;top:1230.6px;width:1.8px;height:35.0px;background:#d9dadd;"></div>
<div style="left:1381.3px;top:1230.6px;width:1.8px;height:35.0px;background:#d9dadd;"></div>
<div style="left:1681.1px;top:1230.6px;width:1.8px;height:35.0px;background:#d9dadd;"></div>
<div style="left:1982.5px;top:1230.6px;width:1.8px;height:35.0px;background:#d9dadd;"></div>
<div style="left:2283.1px;top:1230.6px;width:1.8px;height:35.0px;background:#d9dadd;"></div>
<div style="left:2583.8px;top:1230.6px;width:1.8px;height:35.0px;background:#d9dadd;"></div>
<span class="t s" style="left:854.4px;top:1241.6px;font-size:21.5px;color:#111;transform:scaleX(1.526);">Call via</span>
<span class="t s" style="left:1094.1px;top:1241.6px;font-size:21.5px;color:#111;transform:scaleX(1.541);">Name</span>
<span class="t s" style="left:1395.9px;top:1241.6px;font-size:21.5px;color:#111;transform:scaleX(1.720);">Ordinal</span>
<span class="t s" style="left:1696.4px;top:1241.6px;font-size:21.5px;color:#111;transform:scaleX(1.654);">Original Thunk</span>
<span class="t s" style="left:1996.2px;top:1241.6px;font-size:21.5px;color:#111;transform:scaleX(1.603);">Thunk</span>
<span class="t s" style="left:2295.2px;top:1241.6px;font-size:21.5px;color:#111;transform:scaleX(1.652);">Forwarder</span>
<span class="t s" style="left:2595.5px;top:1241.6px;font-size:21.5px;color:#111;transform:scaleX(1.800);">Hint</span>
<span class="t s" style="left:852.3px;top:1278.9px;font-size:21.5px;color:#1408f2;transform:scaleX(1.510);">5000</span>
<span class="t s" style="left:1092.7px;top:1278.9px;font-size:21.5px;color:#111;transform:scaleX(1.570);">GetThreadPriority</span>
<span class="t s" style="left:1394.4px;top:1278.9px;font-size:21.5px;color:#333;transform:scaleX(1.633);">-</span>
<span class="t s" style="left:1692.5px;top:1278.9px;font-size:21.5px;color:#1408f2;transform:scaleX(1.464);">F148</span>
<span class="t s" style="left:1993.0px;top:1278.9px;font-size:21.5px;color:#1408f2;transform:scaleX(1.475);">F148</span>
<span class="t s" style="left:2295.0px;top:1278.9px;font-size:21.5px;color:#333;transform:scaleX(1.860);">-</span>
<span class="t s" style="left:2592.9px;top:1278.9px;font-size:21.5px;color:#111;transform:scaleX(1.524);">304</span>
<div style="left:843.4px;top:1303.6px;width:2776.6px;height:31.1px;background:#f4f4f4;"></div>
<span class="t s" style="left:852.3px;top:1310.0px;font-size:21.5px;color:#1408f2;transform:scaleX(1.514);">5008</span>
<span class="t s" style="left:1092.7px;top:1310.0px;font-size:21.5px;color:#111;transform:scaleX(1.590);">GetCurrentThread</span>
<span class="t s" style="left:1394.4px;top:1310.0px;font-size:21.5px;color:#333;transform:scaleX(1.633);">-</span>
<span class="t s" style="left:1692.5px;top:1310.0px;font-size:21.5px;color:#1408f2;transform:scaleX(1.477);">F15C</span>
<span class="t s" style="left:1992.9px;top:1310.0px;font-size:21.5px;color:#1408f2;transform:scaleX(1.487);">F15C</span>
<span class="t s" style="left:2295.0px;top:1310.0px;font-size:21.5px;color:#333;transform:scaleX(1.860);">-</span>
<span class="t s" style="left:2592.3px;top:1310.0px;font-size:21.5px;color:#111;transform:scaleX(1.569);">21F</span>
<span class="t s" style="left:852.3px;top:1341.0px;font-size:21.5px;color:#1408f2;transform:scaleX(1.510);">5010</span>
<span class="t s" style="left:1092.7px;top:1341.0px;font-size:21.5px;color:#111;transform:scaleX(1.547);">CreateThread</span>
<span class="t s" style="left:1394.4px;top:1341.0px;font-size:21.5px;color:#333;transform:scaleX(1.633);">-</span>
<span class="t s" style="left:1692.5px;top:1341.0px;font-size:21.5px;color:#1408f2;transform:scaleX(1.461);">F170</span>
<span class="t s" style="left:1993.0px;top:1341.0px;font-size:21.5px;color:#1408f2;transform:scaleX(1.472);">F170</span>
<span class="t s" style="left:2295.0px;top:1341.0px;font-size:21.5px;color:#333;transform:scaleX(1.860);">-</span>
<span class="t s" style="left:2591.3px;top:1341.0px;font-size:21.5px;color:#111;transform:scaleX(1.550);">F0</span>
<div style="left:843.4px;top:1365.7px;width:2776.6px;height:31.1px;background:#f4f4f4;"></div>
<span class="t s" style="left:852.3px;top:1372.1px;font-size:21.5px;color:#1408f2;transform:scaleX(1.514);">5018</span>
<span class="t s" style="left:1094.2px;top:1372.1px;font-size:21.5px;color:#111;transform:scaleX(1.622);">WaitForSingleO...</span>
<span class="t s" style="left:1394.4px;top:1372.1px;font-size:21.5px;color:#333;transform:scaleX(1.633);">-</span>
<span class="t s" style="left:1692.5px;top:1372.1px;font-size:21.5px;color:#1408f2;transform:scaleX(1.461);">F180</span>
<span class="t s" style="left:1993.0px;top:1372.1px;font-size:21.5px;color:#1408f2;transform:scaleX(1.472);">F180</span>
<span class="t s" style="left:2295.0px;top:1372.1px;font-size:21.5px;color:#333;transform:scaleX(1.860);">-</span>
<span class="t s" style="left:2592.7px;top:1372.1px;font-size:21.5px;color:#111;transform:scaleX(1.496);">5DE</span>
<span class="t s" style="left:852.3px;top:1403.1px;font-size:21.5px;color:#1408f2;transform:scaleX(1.510);">5020</span>
<span class="t s" style="left:1091.6px;top:1403.1px;font-size:21.5px;color:#111;transform:scaleX(1.645);">DuplicateHandle</span>
<span class="t s" style="left:1394.4px;top:1403.1px;font-size:21.5px;color:#333;transform:scaleX(1.633);">-</span>
<span class="t s" style="left:1692.5px;top:1403.1px;font-size:21.5px;color:#1408f2;transform:scaleX(1.464);">F196</span>
<span class="t s" style="left:1993.0px;top:1403.1px;font-size:21.5px;color:#1408f2;transform:scaleX(1.475);">F196</span>
<span class="t s" style="left:2295.0px;top:1403.1px;font-size:21.5px;color:#333;transform:scaleX(1.860);">-</span>
<span class="t s" style="left:2591.5px;top:1403.1px;font-size:21.5px;color:#111;transform:scaleX(1.578);">12D</span>
<div style="left:843.4px;top:1427.8px;width:2776.6px;height:31.1px;background:#f4f4f4;"></div>
<span class="t s" style="left:852.3px;top:1434.2px;font-size:21.5px;color:#1408f2;transform:scaleX(1.514);">5028</span>
<span class="t s" style="left:1091.8px;top:1434.2px;font-size:21.5px;color:#111;transform:scaleX(1.534);">ResumeThread</span>
<span class="t s" style="left:1394.4px;top:1434.2px;font-size:21.5px;color:#333;transform:scaleX(1.633);">-</span>
<span class="t s" style="left:1692.5px;top:1434.2px;font-size:21.5px;color:#1408f2;transform:scaleX(1.464);">F138</span>
<span class="t s" style="left:1993.0px;top:1434.2px;font-size:21.5px;color:#1408f2;transform:scaleX(1.475);">F138</span>
<span class="t s" style="left:2295.0px;top:1434.2px;font-size:21.5px;color:#333;transform:scaleX(1.860);">-</span>
<span class="t s" style="left:2593.4px;top:1434.2px;font-size:21.5px;color:#111;transform:scaleX(1.472);">4C9</span>
<div style="left:838.2px;top:1265.0px;width:1853.8px;height:204.4px;background:transparent;border:5px solid #e81c2a;"></div>
</div></div></div>
</body></html>
